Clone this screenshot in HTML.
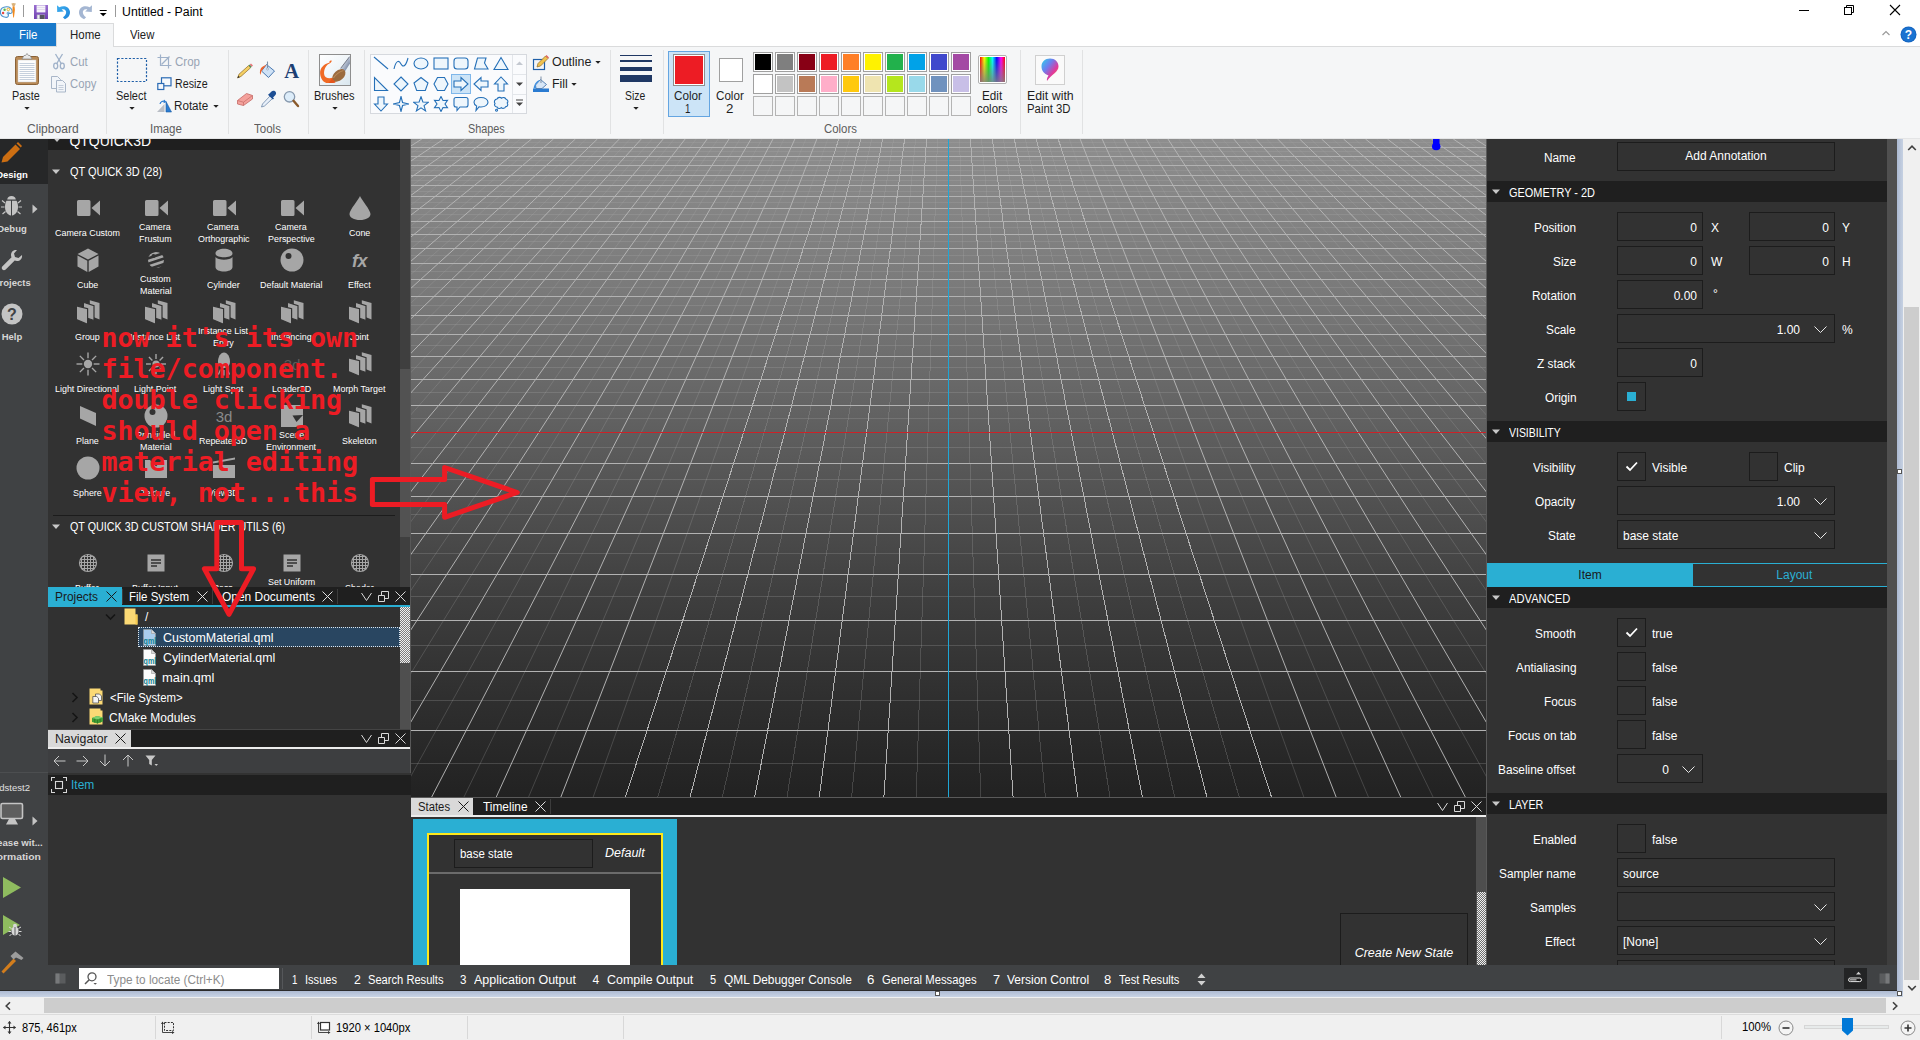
<!DOCTYPE html>
<html lang="en"><head><meta charset="utf-8"><title>Untitled - Paint</title>
<style>
html,body{margin:0;padding:0;}
body{width:1920px;height:1040px;overflow:hidden;position:relative;background:#fff;font-family:"Liberation Sans",sans-serif;}
body div,body svg{position:absolute;}
.t{white-space:nowrap;}
.seg{font-family:"Liberation Sans",sans-serif;}
.q{font-family:"Liberation Sans",sans-serif;}
</style></head>
<body>
<div style="left:0px;top:0px;width:1920px;height:23px;background:#fff;"></div>
<div class="t" style="left:122.38px;top:3.64px;font-size:12px;color:#000;line-height:16px;transform:scaleX(1.0244);transform-origin:0 0;">Untitled - Paint</div>
<svg style="left:0px;top:2px;" width="18" height="18" viewBox="0 0 18 18"><path d="M6.3 4.8 C10 4.6 12.3 6.8 12.2 9.6 C12.1 11 11 11.6 10 11.4 C8.8 11.2 8 11.9 8.3 13 C8.7 14.5 7.5 15.6 5.5 15.3 C2.3 14.8 0.3 12.6 0.4 10 C0.5 7 3 5 6.3 4.8Z" fill="#f4f9fd" stroke="#4c93cc" stroke-width="1.1"/>
<circle cx="4.6" cy="7.8" r="1.2" fill="#57b947"/><circle cx="8.3" cy="7.4" r="1.3" fill="none" stroke="#f0b323" stroke-width="1"/><circle cx="3.1" cy="11" r="1.2" fill="#e8453c"/><circle cx="8.2" cy="11.2" r="1.1" fill="none" stroke="#4c93cc" stroke-width="0.9"/>
<path d="M11.3 1.4 Q13.6 0.4 15.9 1.6 L14.6 4.2 H12.6Z" fill="#d9b27c"/><path d="M12.7 4.2 H14.5 L14.9 8 L13.9 15.6 H13.2 L12.4 8Z" fill="#f28a1e"/></svg>
<div style="left:23px;top:5px;width:1px;height:12px;background:#9a9a9a;"></div>
<svg style="left:33px;top:4px;" width="16" height="16" viewBox="0 0 16 16"><defs><linearGradient id="svg1" x1="0" y1="0" x2="0" y2="1"><stop offset="0" stop-color="#9a6fd0"/><stop offset="1" stop-color="#6f3fb0"/></linearGradient></defs>
<rect x="1" y="1" width="14" height="14" fill="url(#svg1)"/><rect x="3.6" y="1.4" width="8.8" height="7" fill="#f6f3fa"/><path d="M4.2 3.5 H11.8 M4.2 5.5 H11.8" stroke="#d5cce6" stroke-width="0.6"/><rect x="3.8" y="10.6" width="8.2" height="4.4" fill="#b9b9c4"/><rect x="7" y="11" width="4.6" height="4" fill="#55555e"/><rect x="4.6" y="11.2" width="1.4" height="3.4" fill="#f0eef5"/></svg>
<svg style="left:56px;top:4px;" width="16" height="16" viewBox="0 0 16 16"><defs><linearGradient id="ug1" x1="0" y1="0" x2="1" y2="1"><stop offset="0" stop-color="#3fb0f0"/><stop offset="1" stop-color="#1c82d8"/></linearGradient></defs>
<path d="M1 1.2 L1.2 7.9 L7.9 7.6 L5.6 5.4 C8.6 4.4 10.6 6.4 10.1 9 C9.7 11 8.4 12.3 6.9 13.3 L8.9 15.2 C12.6 13.6 14.4 10.6 13.9 7.2 C13.1 2.5 7.6 0.8 3.3 3.3 Z" fill="url(#ug1)"/></svg>
<svg style="left:77px;top:4px;" width="16" height="16" viewBox="0 0 16 16"><path d="M15 1.2 L14.8 7.9 L8.1 7.6 L10.4 5.4 C7.4 4.4 5.4 6.4 5.9 9 C6.3 11 7.6 12.3 9.1 13.3 L7.1 15.2 C3.4 13.6 1.6 10.6 2.1 7.2 C2.9 2.5 8.4 0.8 12.7 3.3 Z" fill="#a4b6d2"/></svg>
<svg style="left:99px;top:8px;" width="9" height="10" viewBox="0 0 9 10"><rect x="0.7" y="2" width="7" height="1" fill="#000"/><path d="M0.9 5 L7.5 5 L4.2 8.3Z" fill="#000"/></svg>
<div style="left:115px;top:5px;width:1px;height:12px;background:#9a9a9a;"></div>
<svg style="left:1790px;top:0px;" width="130" height="23" viewBox="0 0 130 23"><path d="M9 10.5 H19" stroke="#000" stroke-width="1"/>
<rect x="54.5" y="7.5" width="7" height="7" fill="none" stroke="#000" stroke-width="1"/><path d="M56.5 7.5 V5.5 H63.5 V12.5 H61.5" fill="none" stroke="#000" stroke-width="1"/>
<path d="M100 5 L110 15 M110 5 L100 15" stroke="#000" stroke-width="1.1"/></svg>
<div style="left:0px;top:23px;width:1920px;height:24px;background:#fff;border-bottom:1px solid #dadbdc;box-sizing:border-box;"></div>
<div style="left:0px;top:23px;width:56px;height:23px;background:#1979ca;"></div>
<div class="t" style="left:18.64px;top:26.64px;font-size:12px;color:#fff;line-height:16px;transform:scaleX(0.9556);transform-origin:0 0;">File</div>
<div style="left:56px;top:23px;width:58px;height:24px;background:#f5f6f7;border:1px solid #dadbdc;border-bottom:none;box-sizing:border-box;"></div>
<div class="t" style="left:69.64px;top:26.64px;font-size:12px;color:#222;line-height:16px;transform:scaleX(0.9542);transform-origin:0 0;">Home</div>
<div class="t" style="left:129.50px;top:26.64px;font-size:12px;color:#222;line-height:16px;transform:scaleX(0.9419);transform-origin:0 0;">View</div>
<svg style="left:1880px;top:27px;" width="12" height="12" viewBox="0 0 12 12"><path d="M2.5 8 L6 4.5 L9.5 8" fill="none" stroke="#9a9a9a" stroke-width="1.2"/></svg>
<svg style="left:1900px;top:26px;" width="17" height="17" viewBox="0 0 17 17"><circle cx="8.5" cy="8.5" r="8" fill="#1565c0"/><circle cx="8.5" cy="8.5" r="7" fill="#1a73d1"/><text x="8.5" y="13" font-size="12" font-weight="bold" fill="#fff" text-anchor="middle" font-family="Liberation Sans, sans-serif">?</text></svg>
<div style="left:0px;top:47px;width:1920px;height:91px;background:#f5f6f7;"></div>
<div style="left:0px;top:138px;width:1920px;height:1px;background:#e4e5e6;"></div>
<div style="left:106px;top:50px;width:1px;height:84px;background:#e1e2e3;"></div>
<div style="left:228px;top:50px;width:1px;height:84px;background:#e1e2e3;"></div>
<div style="left:308px;top:50px;width:1px;height:84px;background:#e1e2e3;"></div>
<div style="left:364px;top:50px;width:1px;height:84px;background:#e1e2e3;"></div>
<div style="left:610px;top:50px;width:1px;height:84px;background:#e1e2e3;"></div>
<div style="left:663px;top:50px;width:1px;height:84px;background:#e1e2e3;"></div>
<div style="left:1020px;top:50px;width:1px;height:84px;background:#e1e2e3;"></div>
<div style="left:1082px;top:50px;width:1px;height:84px;background:#e1e2e3;"></div>
<div class="t" style="left:26.90px;top:120.64px;font-size:12px;color:#5c5c5c;line-height:16px;transform:scaleX(1.0060);transform-origin:0 0;">Clipboard</div>
<div class="t" style="left:150.25px;top:120.64px;font-size:12px;color:#5c5c5c;line-height:16px;transform:scaleX(0.9560);transform-origin:0 0;">Image</div>
<div class="t" style="left:254.01px;top:120.64px;font-size:12px;color:#5c5c5c;line-height:16px;transform:scaleX(0.9599);transform-origin:0 0;">Tools</div>
<div class="t" style="left:467.85px;top:120.64px;font-size:12px;color:#5c5c5c;line-height:16px;transform:scaleX(0.9020);transform-origin:0 0;">Shapes</div>
<div class="t" style="left:824.13px;top:120.64px;font-size:12px;color:#5c5c5c;line-height:16px;transform:scaleX(0.9496);transform-origin:0 0;">Colors</div>
<svg style="left:13px;top:52px;" width="28" height="34" viewBox="0 0 28 34"><rect x="2.5" y="4.5" width="23" height="28" rx="2" fill="#b98a56" stroke="#8a6238" stroke-width="1"/>
<rect x="5" y="8" width="18" height="22" fill="#fdfdfd" stroke="#c9c9c9" stroke-width="0.5"/>
<g stroke="#b8c4d4" stroke-width="0.8"><path d="M6.5 11.5h15M6.5 13.5h15M6.5 15.5h15M6.5 17.5h15M6.5 19.5h15M6.5 21.5h15M6.5 23.5h15M6.5 25.5h15M6.5 27.5h15"/></g>
<path d="M9 7 L11 3.5 L12.5 3.5 L14 1.5 L15.5 3.5 L17 3.5 L19 7 Z" fill="#e8e8e8" stroke="#8a8a8a" stroke-width="0.8"/></svg>
<div class="t" style="left:12.49px;top:87.84px;font-size:12px;color:#1e1e1e;line-height:16px;transform:scaleX(0.9010);transform-origin:0 0;">Paste</div>
<svg style="left:23.5px;top:106.5px;" width="6" height="4" viewBox="0 0 6 4"><path d="M0.3 0 L5.7 0 L3 2.8Z" fill="#222"/></svg>
<svg style="left:52px;top:53px;" width="14" height="17" viewBox="0 0 14 17"><g fill="none" stroke="#9fb1c9" stroke-width="1.3"><path d="M3.5 1 L9.5 11"/><path d="M10.5 1 L4.5 11"/><ellipse cx="3.7" cy="13" rx="2" ry="2.8"/><ellipse cx="10.3" cy="13" rx="2" ry="2.8"/></g></svg>
<div class="t" style="left:69.93px;top:53.64px;font-size:12px;color:#98a4b4;line-height:16px;transform:scaleX(0.9444);transform-origin:0 0;">Cut</div>
<svg style="left:50px;top:75px;" width="17" height="18" viewBox="0 0 17 18"><g fill="#f2f5f9" stroke="#a9b6c8" stroke-width="1"><path d="M1.5 1.5 h6 l3 3 v9 h-9z"/><path d="M6.5 5.5 h6 l3 3 v8.5 h-9z"/></g><g stroke="#b9c4d3" stroke-width="0.8"><path d="M8.5 10.5h5M8.5 12.5h5M8.5 14.5h5"/></g></svg>
<div class="t" style="left:69.94px;top:75.64px;font-size:12px;color:#98a4b4;line-height:16px;transform:scaleX(0.9380);transform-origin:0 0;">Copy</div>
<svg style="left:116px;top:57px;" width="32" height="26" viewBox="0 0 32 26"><rect x="1.5" y="1.5" width="29" height="23" fill="none" stroke="#1f5fa8" stroke-width="1.2" stroke-dasharray="2.2 1.6"/></svg>
<div class="t" style="left:115.74px;top:87.84px;font-size:12px;color:#1e1e1e;line-height:16px;transform:scaleX(0.9146);transform-origin:0 0;">Select</div>
<svg style="left:128.5px;top:106.5px;" width="6" height="4" viewBox="0 0 6 4"><path d="M0.3 0 L5.7 0 L3 2.8Z" fill="#222"/></svg>
<svg style="left:157px;top:54px;" width="15" height="15" viewBox="0 0 15 15"><g fill="none" stroke="#9fb1c9" stroke-width="1.2"><path d="M3.5 0.5 V11.5 H14.5"/><path d="M0.5 3.5 H11.5 V14.5"/><path d="M12.5 2.5 L4.5 10.5"/></g></svg>
<div class="t" style="left:174.72px;top:53.64px;font-size:12px;color:#98a4b4;line-height:16px;transform:scaleX(0.9598);transform-origin:0 0;">Crop</div>
<svg style="left:157px;top:77px;" width="15" height="14" viewBox="0 0 15 14"><g fill="#f5f8fc" stroke="#2a6ab4" stroke-width="1.2"><rect x="4.5" y="0.8" width="9.5" height="8"/><rect x="0.8" y="6.5" width="6" height="6"/></g></svg>
<div class="t" style="left:174.50px;top:75.64px;font-size:12px;color:#1e1e1e;line-height:16px;transform:scaleX(0.8895);transform-origin:0 0;">Resize</div>
<svg style="left:156px;top:99px;" width="17" height="14" viewBox="0 0 17 14"><path d="M1 13 L8.5 13 L8.5 5 Z" fill="#b9bec6"/><path d="M10 13 L15.5 13 L10 2.5 Z" fill="#2a7bd1" stroke="#1d5ea6" stroke-width="0.6"/><path d="M4 5 C4.5 2.5 7 1.5 9 2.5" fill="none" stroke="#2a7bd1" stroke-width="1.2"/><path d="M8 0.5 L10.5 3 L7.5 4.2Z" fill="#2a7bd1"/></svg>
<div class="t" style="left:174.43px;top:97.84px;font-size:12px;color:#1e1e1e;line-height:16px;transform:scaleX(0.9706);transform-origin:0 0;">Rotate</div>
<svg style="left:213px;top:104.5px;" width="6" height="4" viewBox="0 0 6 4"><path d="M0.3 0 L5.7 0 L3 2.8Z" fill="#222"/></svg>
<svg style="left:236px;top:62px;" width="18" height="18" viewBox="0 0 18 18"><path d="M1.5 16 L3 12.2 L12.6 3.6 L14.6 5.8 L5 14.4 Z" fill="#f4cf63" stroke="#8d6a2a" stroke-width="0.7"/><path d="M12.6 3.6 L13.8 2.5 L15.8 4.7 L14.6 5.8Z" fill="#4f8f5c"/><path d="M13.8 2.5 L15 1.4 L17 3.6 L15.8 4.7Z" fill="#e8787a"/><path d="M1.5 16 L2.4 13.7 L3.8 15.2Z" fill="#2a2a2a"/></svg>
<svg style="left:259px;top:61px;" width="18" height="18" viewBox="0 0 18 18"><path d="M7.5 3.5 L15.5 10 L9.5 16.5 L2.5 10 Z" fill="#cfe2f6" stroke="#4a78b0" stroke-width="1"/><path d="M2.5 10 L7.5 3.5 L3 6 C1 7.5 0.5 11 1.2 14 C2 12 2.2 11 2.5 10Z" fill="#f0622a"/><path d="M8.5 0.5 V8" stroke="#7d8fa6" stroke-width="1.1"/><circle cx="8.5" cy="8" r="1" fill="#fff" stroke="#7d8fa6" stroke-width="0.6"/></svg>
<div class="t" style="left:284.3px;top:58.5px;font-size:20.5px;color:#1c3f73;line-height:24px;font-family:'Liberation Serif',serif;font-weight:bold;">A</div>
<svg style="left:236px;top:91px;" width="18" height="16" viewBox="0 0 18 16"><path d="M1.5 9.5 L10.5 2.5 L16.5 4.5 L16.5 8 L7.5 14.5 L1.5 13 Z" fill="#f4a19c" stroke="#c46a66" stroke-width="0.8"/><path d="M1.5 9.5 L7.5 11.2 L16.5 4.5 M7.5 11.2 V14.5" fill="none" stroke="#c46a66" stroke-width="0.7"/></svg>
<svg style="left:260px;top:90px;" width="17" height="18" viewBox="0 0 17 18"><path d="M10 6 L12.5 8.5 L4.5 16 L1.5 17 L2.5 14 Z" fill="#e8f0fa" stroke="#6c86a8" stroke-width="0.8"/><path d="M9 4 L11.5 1.5 C13 0.3 15.5 0.8 16 2.8 C16.3 4.3 15.5 5 14.5 6 L13 7.5 L14 8.5 L12.8 9.6 L8 4.8 L9.2 3.7Z" fill="#1d4f94"/></svg>
<svg style="left:283px;top:90px;" width="17" height="18" viewBox="0 0 17 18"><circle cx="6.5" cy="6.8" r="5.2" fill="#dcecf9" stroke="#8799ae" stroke-width="1.3"/><path d="M10.5 10.8 L15 16" stroke="#8a5a2b" stroke-width="2.4" stroke-linecap="round"/></svg>
<div style="left:319px;top:54px;width:32px;height:32px;background:linear-gradient(135deg,#ffffff 0%,#eef4f8 55%,#d9e6ee 100%);border:1px solid #8e8e8e;box-sizing:border-box;"></div>
<svg style="left:319px;top:54px;" width="32" height="32" viewBox="0 0 32 32"><defs><linearGradient id="bh1" x1="0" y1="0" x2="1" y2="1"><stop offset="0" stop-color="#eef1f6"/><stop offset="0.5" stop-color="#aeb9cc"/><stop offset="1" stop-color="#4c5d7c"/></linearGradient></defs>
<path d="M12.8 6.8 C11.5 6 10 7 10.6 8.6 C5 10 0.9 14 1.1 19.2 C1.4 25 5 29.5 9.5 29 C13 28.8 15.5 28.5 16.8 27.9 L13.9 23.5 C10 25 5.5 24 5.1 19.9 C4.8 15 7 12 8.7 10.4 C10.5 9.5 12.5 9 12.8 6.8Z" fill="#f06a25"/>
<path d="M21.6 14.4 L30.6 2.6 L31 9.5 L25.4 18.2Z" fill="url(#bh1)"/><path d="M21.6 14.4 L30.6 2.6" stroke="#5c6170" stroke-width="0.8"/>
<ellipse cx="19.9" cy="21.4" rx="7.6" ry="5" transform="rotate(-42 19.9 21.4)" fill="#9a6b3f"/><path d="M14.5 24 C17 20 21 17.5 24.5 16.5" stroke="#b88858" stroke-width="1.2" fill="none"/>
<path d="M13.2 24.5 L16.5 28.2 C14.5 29 11 29.2 9.5 29 Z" fill="#e4551c"/></svg>
<div class="t" style="left:314.47px;top:87.84px;font-size:12px;color:#1e1e1e;line-height:16px;transform:scaleX(0.9180);transform-origin:0 0;">Brushes</div>
<svg style="left:331.5px;top:106.5px;" width="6" height="4" viewBox="0 0 6 4"><path d="M0.3 0 L5.7 0 L3 2.8Z" fill="#222"/></svg>
<div style="left:370px;top:54px;width:157px;height:60px;background:#fafbfd;border:1px solid #d6d9de;box-sizing:border-box;"></div>
<div style="left:512px;top:55px;width:1px;height:58px;background:#e3e6ea;"></div>
<div style="left:451px;top:74px;width:20px;height:20px;background:#cce4f7;border:1px solid #7fb7ea;box-sizing:border-box;"></div>
<svg style="left:373px;top:56px;" width="16" height="16" viewBox="0 0 16 16"><path d="M1 1 L15 13" fill="none" stroke="#2570b8" stroke-width="1.1"/></svg>
<svg style="left:393px;top:56px;" width="16" height="16" viewBox="0 0 16 16"><path d="M1 13 C3 4 6 4 8 8 C10 12 13 10 15 2" fill="none" stroke="#2570b8" stroke-width="1.1"/></svg>
<svg style="left:413px;top:56px;" width="16" height="16" viewBox="0 0 16 16"><ellipse cx="8" cy="7.5" rx="7" ry="5.5" fill="#eef6fc" stroke="#2570b8" stroke-width="1.1" stroke-linejoin="miter"/></svg>
<svg style="left:433px;top:56px;" width="16" height="16" viewBox="0 0 16 16"><rect x="1" y="2" width="14" height="11" fill="#eef6fc" stroke="#2570b8" stroke-width="1.1" stroke-linejoin="miter"/></svg>
<svg style="left:453px;top:56px;" width="16" height="16" viewBox="0 0 16 16"><rect x="1" y="2" width="14" height="11" rx="3" fill="#eef6fc" stroke="#2570b8" stroke-width="1.1" stroke-linejoin="miter"/></svg>
<svg style="left:473px;top:56px;" width="16" height="16" viewBox="0 0 16 16"><path d="M1.5 13 L4.5 2 L13 2 L11.5 7 L15 13 Z" fill="#eef6fc" stroke="#2570b8" stroke-width="1.1" stroke-linejoin="miter"/></svg>
<svg style="left:493px;top:56px;" width="16" height="16" viewBox="0 0 16 16"><path d="M8 1.5 L15 13.5 L1 13.5 Z" fill="#eef6fc" stroke="#2570b8" stroke-width="1.1" stroke-linejoin="miter"/></svg>
<svg style="left:373px;top:76px;" width="16" height="16" viewBox="0 0 16 16"><path d="M1.5 1.5 L1.5 14.5 L14.5 14.5 Z" fill="#eef6fc" stroke="#2570b8" stroke-width="1.1" stroke-linejoin="miter"/></svg>
<svg style="left:393px;top:76px;" width="16" height="16" viewBox="0 0 16 16"><path d="M8 1 L15 8 L8 15 L1 8 Z" fill="#eef6fc" stroke="#2570b8" stroke-width="1.1" stroke-linejoin="miter"/></svg>
<svg style="left:413px;top:76px;" width="16" height="16" viewBox="0 0 16 16"><path d="M8 1.5 L15 7 L12.3 14.5 L3.7 14.5 L1 7 Z" fill="#eef6fc" stroke="#2570b8" stroke-width="1.1" stroke-linejoin="miter"/></svg>
<svg style="left:433px;top:76px;" width="16" height="16" viewBox="0 0 16 16"><path d="M4.5 1.5 L11.5 1.5 L15 8 L11.5 14.5 L4.5 14.5 L1 8 Z" fill="#eef6fc" stroke="#2570b8" stroke-width="1.1" stroke-linejoin="miter"/></svg>
<svg style="left:453px;top:76px;" width="16" height="16" viewBox="0 0 16 16"><path d="M1 5 L8 5 L8 1.5 L15 8 L8 14.5 L8 11 L1 11 Z" fill="#eef6fc" stroke="#2570b8" stroke-width="1.1" stroke-linejoin="miter"/></svg>
<svg style="left:473px;top:76px;" width="16" height="16" viewBox="0 0 16 16"><path d="M15 5 L8 5 L8 1.5 L1 8 L8 14.5 L8 11 L15 11 Z" fill="#eef6fc" stroke="#2570b8" stroke-width="1.1" stroke-linejoin="miter"/></svg>
<svg style="left:493px;top:76px;" width="16" height="16" viewBox="0 0 16 16"><path d="M5 15 L5 8 L1.5 8 L8 1 L14.5 8 L11 8 L11 15 Z" fill="#eef6fc" stroke="#2570b8" stroke-width="1.1" stroke-linejoin="miter"/></svg>
<svg style="left:373px;top:96px;" width="16" height="16" viewBox="0 0 16 16"><path d="M5 1 L5 8 L1.5 8 L8 15 L14.5 8 L11 8 L11 1 Z" fill="#eef6fc" stroke="#2570b8" stroke-width="1.1" stroke-linejoin="miter"/></svg>
<svg style="left:393px;top:96px;" width="16" height="16" viewBox="0 0 16 16"><polygon points="8.00,0.50 9.56,6.44 15.50,8.00 9.56,9.56 8.00,15.50 6.44,9.56 0.50,8.00 6.44,6.44" fill="#eef6fc" stroke="#2570b8" stroke-width="1.1" stroke-linejoin="miter"/></svg>
<svg style="left:413px;top:96px;" width="16" height="16" viewBox="0 0 16 16"><polygon points="8.00,0.80 9.88,6.01 15.42,6.19 11.04,9.59 12.58,14.91 8.00,11.80 3.42,14.91 4.96,9.59 0.58,6.19 6.12,6.01" fill="#eef6fc" stroke="#2570b8" stroke-width="1.1" stroke-linejoin="miter"/></svg>
<svg style="left:433px;top:96px;" width="16" height="16" viewBox="0 0 16 16"><polygon points="8.00,0.50 10.00,4.54 14.50,4.25 12.00,8.00 14.50,11.75 10.00,11.46 8.00,15.50 6.00,11.46 1.50,11.75 4.00,8.00 1.50,4.25 6.00,4.54" fill="#eef6fc" stroke="#2570b8" stroke-width="1.1" stroke-linejoin="miter"/></svg>
<svg style="left:453px;top:96px;" width="16" height="16" viewBox="0 0 16 16"><path d="M3 1.5 H13 Q15 1.5 15 3.5 V9 Q15 11 13 11 H7 L4 14.5 V11 H3 Q1 11 1 9 V3.5 Q1 1.5 3 1.5Z" fill="#eef6fc" stroke="#2570b8" stroke-width="1.1" stroke-linejoin="miter"/></svg>
<svg style="left:473px;top:96px;" width="16" height="16" viewBox="0 0 16 16"><path d="M8 1.5 C12 1.5 15 3.6 15 6.3 C15 9 12 11 8 11 C7.3 11 6.6 10.9 6 10.8 L3 14.5 L3.6 10 C2 9.2 1 7.8 1 6.3 C1 3.6 4 1.5 8 1.5Z" fill="#eef6fc" stroke="#2570b8" stroke-width="1.1" stroke-linejoin="miter"/></svg>
<svg style="left:493px;top:96px;" width="16" height="16" viewBox="0 0 16 16"><path d="M4 3 C5 1 7.5 1 8.5 2.2 C10 1 12.5 1.5 13 3.2 C15 3.5 15.5 6 14.2 7 C15.5 8.5 14.5 10.8 12.5 10.8 C12 12.5 9.5 12.8 8.3 11.6 C7 13 4.5 12.6 4 11 C2 11 0.8 9 2 7.4 C0.6 6 1.6 3.2 4 3Z M3.5 13.2 a1 1 0 1 0 0.1 0Z" fill="#eef6fc" stroke="#2570b8" stroke-width="1.1" stroke-linejoin="miter"/></svg>
<svg style="left:516px;top:61px;" width="8" height="5" viewBox="0 0 8 5"><path d="M0 4 L3.5 0.5 L7 4Z" fill="#c3c8d0"/></svg>
<svg style="left:516px;top:82px;" width="8" height="5" viewBox="0 0 8 5"><path d="M0 0.5 L7 0.5 L3.5 4Z" fill="#444"/></svg>
<svg style="left:516px;top:99px;" width="8" height="8" viewBox="0 0 8 8"><rect x="0" y="0.5" width="7" height="1" fill="#444"/><path d="M0 3.5 L7 3.5 L3.5 7Z" fill="#444"/></svg>
<div style="left:513px;top:94px;width:13px;height:1px;background:#e3e6ea;"></div>
<div style="left:513px;top:74px;width:13px;height:1px;background:#e3e6ea;"></div>
<svg style="left:532px;top:54px;" width="18" height="17" viewBox="0 0 18 17"><rect x="1.5" y="5.5" width="11" height="10" fill="none" stroke="#1f5fa8" stroke-width="1.2"/><path d="M5 13 L6 9.5 L13.5 2 L16 4.5 L8.5 12 Z" fill="#f2c24e" stroke="#8d6a2a" stroke-width="0.7"/><path d="M13.5 2 L14.5 1 L17 3.5 L16 4.5Z" fill="#e0605a"/></svg>
<div class="t" style="left:551.98px;top:53.64px;font-size:12px;color:#1e1e1e;line-height:16px;transform:scaleX(1.0351);transform-origin:0 0;">Outline</div>
<svg style="left:594.5px;top:60.5px;" width="6" height="4" viewBox="0 0 6 4"><path d="M0.3 0 L5.7 0 L3 2.8Z" fill="#222"/></svg>
<svg style="left:532px;top:76px;" width="18" height="17" viewBox="0 0 18 17"><rect x="1" y="12.5" width="16" height="3.5" fill="#2a7bd1"/><path d="M8.5 3.5 L14.5 8.5 L10 12.5 L4 12.5 L3.5 9 Z" fill="#d7e6f6" stroke="#4a78b0" stroke-width="0.9"/><path d="M3.5 9 L8 4 C5 4.5 2.5 7 1.5 12.5 L4 12.5Z" fill="#3d8fe0"/><path d="M9 0.5 V7" stroke="#7d8fa6" stroke-width="1"/></svg>
<div class="t" style="left:551.57px;top:75.64px;font-size:12px;color:#1e1e1e;line-height:16px;transform:scaleX(1.0365);transform-origin:0 0;">Fill</div>
<svg style="left:570.5px;top:82.5px;" width="6" height="4" viewBox="0 0 6 4"><path d="M0.3 0 L5.7 0 L3 2.8Z" fill="#222"/></svg>
<div style="left:620px;top:55px;width:32px;height:1px;background:#1f3864;"></div>
<div style="left:620px;top:60px;width:32px;height:2px;background:#1f3864;"></div>
<div style="left:620px;top:67px;width:32px;height:4px;background:#1f3864;"></div>
<div style="left:620px;top:75px;width:32px;height:7px;background:#1f3864;"></div>
<div class="t" style="left:624.87px;top:87.84px;font-size:12px;color:#1e1e1e;line-height:16px;transform:scaleX(0.8661);transform-origin:0 0;">Size</div>
<svg style="left:632.5px;top:106.5px;" width="6" height="4" viewBox="0 0 6 4"><path d="M0.3 0 L5.7 0 L3 2.8Z" fill="#222"/></svg>
<div style="left:668px;top:51px;width:42px;height:66px;background:#cce4f7;border:1px solid #64a5e1;box-sizing:border-box;"></div>
<div style="left:673px;top:54px;width:32px;height:32px;background:#fff;border:1px solid #8e8e8e;box-sizing:border-box;"></div>
<div style="left:675px;top:56px;width:28px;height:28px;background:#ed1c24;"></div>
<div class="t" style="left:673.92px;top:87.84px;font-size:12px;color:#1e1e1e;line-height:16px;transform:scaleX(0.9749);transform-origin:0 0;">Color</div>
<div class="t" style="left:685.07px;top:100.64px;font-size:12px;color:#1e1e1e;line-height:16px;transform:scaleX(0.8077);transform-origin:0 0;">1</div>
<div style="left:719px;top:58px;width:24px;height:24px;background:#fff;border:1px solid #a0a0a0;box-sizing:border-box;"></div>
<div class="t" style="left:716.12px;top:87.84px;font-size:12px;color:#1e1e1e;line-height:16px;transform:scaleX(0.9677);transform-origin:0 0;">Color</div>
<div class="t" style="left:726.03px;top:100.64px;font-size:12px;color:#1e1e1e;line-height:16px;transform:scaleX(1.1091);transform-origin:0 0;">2</div>
<div style="left:753px;top:52px;width:20px;height:20px;background:#fff;border:1px solid #a0a0a0;box-sizing:border-box;"></div>
<div style="left:755px;top:54px;width:16px;height:16px;background:#000000;"></div>
<div style="left:775px;top:52px;width:20px;height:20px;background:#fff;border:1px solid #a0a0a0;box-sizing:border-box;"></div>
<div style="left:777px;top:54px;width:16px;height:16px;background:#7f7f7f;"></div>
<div style="left:797px;top:52px;width:20px;height:20px;background:#fff;border:1px solid #a0a0a0;box-sizing:border-box;"></div>
<div style="left:799px;top:54px;width:16px;height:16px;background:#880015;"></div>
<div style="left:819px;top:52px;width:20px;height:20px;background:#fff;border:1px solid #a0a0a0;box-sizing:border-box;"></div>
<div style="left:821px;top:54px;width:16px;height:16px;background:#ed1c24;"></div>
<div style="left:841px;top:52px;width:20px;height:20px;background:#fff;border:1px solid #a0a0a0;box-sizing:border-box;"></div>
<div style="left:843px;top:54px;width:16px;height:16px;background:#ff7f27;"></div>
<div style="left:863px;top:52px;width:20px;height:20px;background:#fff;border:1px solid #a0a0a0;box-sizing:border-box;"></div>
<div style="left:865px;top:54px;width:16px;height:16px;background:#fff200;"></div>
<div style="left:885px;top:52px;width:20px;height:20px;background:#fff;border:1px solid #a0a0a0;box-sizing:border-box;"></div>
<div style="left:887px;top:54px;width:16px;height:16px;background:#22b14c;"></div>
<div style="left:907px;top:52px;width:20px;height:20px;background:#fff;border:1px solid #a0a0a0;box-sizing:border-box;"></div>
<div style="left:909px;top:54px;width:16px;height:16px;background:#00a2e8;"></div>
<div style="left:929px;top:52px;width:20px;height:20px;background:#fff;border:1px solid #a0a0a0;box-sizing:border-box;"></div>
<div style="left:931px;top:54px;width:16px;height:16px;background:#3f48cc;"></div>
<div style="left:951px;top:52px;width:20px;height:20px;background:#fff;border:1px solid #a0a0a0;box-sizing:border-box;"></div>
<div style="left:953px;top:54px;width:16px;height:16px;background:#a349a4;"></div>
<div style="left:753px;top:74px;width:20px;height:20px;background:#fff;border:1px solid #a0a0a0;box-sizing:border-box;"></div>
<div style="left:755px;top:76px;width:16px;height:16px;background:#ffffff;"></div>
<div style="left:775px;top:74px;width:20px;height:20px;background:#fff;border:1px solid #a0a0a0;box-sizing:border-box;"></div>
<div style="left:777px;top:76px;width:16px;height:16px;background:#c3c3c3;"></div>
<div style="left:797px;top:74px;width:20px;height:20px;background:#fff;border:1px solid #a0a0a0;box-sizing:border-box;"></div>
<div style="left:799px;top:76px;width:16px;height:16px;background:#b97a57;"></div>
<div style="left:819px;top:74px;width:20px;height:20px;background:#fff;border:1px solid #a0a0a0;box-sizing:border-box;"></div>
<div style="left:821px;top:76px;width:16px;height:16px;background:#ffaec9;"></div>
<div style="left:841px;top:74px;width:20px;height:20px;background:#fff;border:1px solid #a0a0a0;box-sizing:border-box;"></div>
<div style="left:843px;top:76px;width:16px;height:16px;background:#ffc90e;"></div>
<div style="left:863px;top:74px;width:20px;height:20px;background:#fff;border:1px solid #a0a0a0;box-sizing:border-box;"></div>
<div style="left:865px;top:76px;width:16px;height:16px;background:#efe4b0;"></div>
<div style="left:885px;top:74px;width:20px;height:20px;background:#fff;border:1px solid #a0a0a0;box-sizing:border-box;"></div>
<div style="left:887px;top:76px;width:16px;height:16px;background:#b5e61d;"></div>
<div style="left:907px;top:74px;width:20px;height:20px;background:#fff;border:1px solid #a0a0a0;box-sizing:border-box;"></div>
<div style="left:909px;top:76px;width:16px;height:16px;background:#99d9ea;"></div>
<div style="left:929px;top:74px;width:20px;height:20px;background:#fff;border:1px solid #a0a0a0;box-sizing:border-box;"></div>
<div style="left:931px;top:76px;width:16px;height:16px;background:#7092be;"></div>
<div style="left:951px;top:74px;width:20px;height:20px;background:#fff;border:1px solid #a0a0a0;box-sizing:border-box;"></div>
<div style="left:953px;top:76px;width:16px;height:16px;background:#c8bfe7;"></div>
<div style="left:753px;top:96px;width:20px;height:20px;background:#f5f6f7;border:1px solid #b4b4b4;box-sizing:border-box;"></div>
<div style="left:775px;top:96px;width:20px;height:20px;background:#f5f6f7;border:1px solid #b4b4b4;box-sizing:border-box;"></div>
<div style="left:797px;top:96px;width:20px;height:20px;background:#f5f6f7;border:1px solid #b4b4b4;box-sizing:border-box;"></div>
<div style="left:819px;top:96px;width:20px;height:20px;background:#f5f6f7;border:1px solid #b4b4b4;box-sizing:border-box;"></div>
<div style="left:841px;top:96px;width:20px;height:20px;background:#f5f6f7;border:1px solid #b4b4b4;box-sizing:border-box;"></div>
<div style="left:863px;top:96px;width:20px;height:20px;background:#f5f6f7;border:1px solid #b4b4b4;box-sizing:border-box;"></div>
<div style="left:885px;top:96px;width:20px;height:20px;background:#f5f6f7;border:1px solid #b4b4b4;box-sizing:border-box;"></div>
<div style="left:907px;top:96px;width:20px;height:20px;background:#f5f6f7;border:1px solid #b4b4b4;box-sizing:border-box;"></div>
<div style="left:929px;top:96px;width:20px;height:20px;background:#f5f6f7;border:1px solid #b4b4b4;box-sizing:border-box;"></div>
<div style="left:951px;top:96px;width:20px;height:20px;background:#f5f6f7;border:1px solid #b4b4b4;box-sizing:border-box;"></div>
<div style="left:978px;top:55px;width:29px;height:29px;background:#fff;border:1px solid #b0b0b0;box-sizing:border-box;border-radius:2px;"></div>
<div style="left:980px;top:57px;width:25px;height:25px;background:linear-gradient(to bottom,rgba(128,128,128,0) 0%,rgba(128,128,128,0.85) 100%),linear-gradient(to right,#f00 0%,#ff0 17%,#0f0 34%,#0ff 50%,#00f 67%,#f0f 84%,#f00 100%);"></div>
<div class="t" style="left:981.62px;top:87.84px;font-size:12px;color:#1e1e1e;line-height:16px;transform:scaleX(0.9746);transform-origin:0 0;">Edit</div>
<div class="t" style="left:977.32px;top:100.64px;font-size:12px;color:#1e1e1e;line-height:16px;transform:scaleX(0.9550);transform-origin:0 0;">colors</div>
<div style="left:1035px;top:55px;width:30px;height:30px;background:#fafafa;border:1px solid #d0d0d0;box-sizing:border-box;"></div>
<svg style="left:1035px;top:55px;" width="30" height="30" viewBox="0 0 30 30"><defs><linearGradient id="p3d" x1="0" y1="0" x2="1" y2="1"><stop offset="0" stop-color="#2bd4e8"/><stop offset="0.35" stop-color="#6b7ff0"/><stop offset="0.65" stop-color="#e0389c"/><stop offset="1" stop-color="#ff9a1f"/></linearGradient></defs>
<path d="M15 3.5 C20 3.5 23.5 7 23.5 11.5 C23.5 17 17 19 12 26 C11.5 24 12.5 22 13.5 20.5 C9 19 6.5 15.5 6.5 11.5 C6.5 7 10 3.5 15 3.5Z" fill="url(#p3d)"/></svg>
<div class="t" style="left:1026.57px;top:87.84px;font-size:12px;color:#1e1e1e;line-height:16px;transform:scaleX(1.0297);transform-origin:0 0;">Edit with</div>
<div class="t" style="left:1027.45px;top:100.64px;font-size:12px;color:#1e1e1e;line-height:16px;transform:scaleX(0.9462);transform-origin:0 0;">Paint 3D</div>
<div style="left:0px;top:139px;width:48px;height:852px;background:#404244;"></div>
<div style="left:0px;top:139px;width:48px;height:45px;background:#262728;"></div>
<div class="t q" style="left:-28.0px;top:167.7px;font-size:9.5px;color:#ffffff;width:80px;text-align:center;line-height:14px;font-weight:bold;">Design</div>
<div class="t q" style="left:-28.0px;top:221.7px;font-size:9.5px;color:#d6d6d6;width:80px;text-align:center;line-height:14px;font-weight:bold;">Debug</div>
<div class="t q" style="left:-28.0px;top:275.6px;font-size:9.5px;color:#d6d6d6;width:80px;text-align:center;line-height:14px;font-weight:bold;">Projects</div>
<div class="t q" style="left:-28.0px;top:329.5px;font-size:9.5px;color:#d6d6d6;width:80px;text-align:center;line-height:14px;font-weight:bold;">Help</div>
<svg style="left:0px;top:141px;" width="24" height="24" viewBox="0 0 24 24"><path d="M1.5 21.5 L3 16 L15.5 3.5 L20 8 L7.5 20.5 Z" fill="#cc6e12"/><path d="M16.5 2.5 L18 1 L22 5 L20.8 6.5Z" fill="#cc6e12"/></svg>
<svg style="left:0px;top:194px;" width="24" height="24" viewBox="0 0 24 24"><g fill="#c4c4c4"><path d="M11.5 2 C14 2 15.5 3.5 15.8 5.5 L7.2 5.5 C7.5 3.5 9 2 11.5 2Z"/><path d="M6.5 6.8 H11 V21.5 C7.5 21 5 17.5 5 13 C5 10.5 5.5 8.3 6.5 6.8Z M12 6.8 H16.5 C17.5 8.3 18 10.5 18 13 C18 17.5 15.5 21 12 21.5Z"/></g>
<g stroke="#c4c4c4" stroke-width="1.2" fill="none"><path d="M5 9 L2 6.5 M4.5 13 H1 M5.5 17.5 L2.5 20 M18 9 L21 6.5 M18.5 13 H22 M17.5 17.5 L20.5 20"/></g></svg>
<svg style="left:32px;top:204px;" width="6" height="10" viewBox="0 0 6 10"><path d="M0.5 0.5 L5.5 5 L0.5 9.5Z" fill="#c4c4c4"/></svg>
<svg style="left:0px;top:248px;" width="24" height="24" viewBox="0 0 24 24"><path d="M17 2 C14 1.5 11 3.5 11 7 C11 8 11.2 8.6 11.5 9.3 L2.5 18.3 C1.5 19.3 1.5 20.7 2.4 21.6 C3.3 22.5 4.7 22.5 5.7 21.5 L14.7 12.5 C15.4 12.8 16 13 17 13 C20.5 13 22.5 10 22 7 L18.5 10 L15 9 L14 5.5Z" fill="#c4c4c4"/></svg>
<svg style="left:1px;top:303px;" width="22" height="22" viewBox="0 0 22 22"><circle cx="11" cy="11" r="10.5" fill="#c4c4c4"/><text x="11" y="16.5" font-size="16" font-weight="bold" fill="#404244" text-anchor="middle" font-family="Liberation Sans, sans-serif">?</text></svg>
<div style="left:0px;top:772px;width:48px;height:1px;background:#4c4e50;"></div>
<div class="t q" style="left:-28.0px;top:781.0px;font-size:9.5px;color:#e0e0e0;width:80px;text-align:center;line-height:13px;">qdstest2</div>
<svg style="left:0px;top:802px;" width="26" height="26" viewBox="0 0 26 26"><rect x="1" y="1.5" width="21.5" height="15" rx="1.5" fill="#5e5e5e" stroke="#c4c4c4" stroke-width="1.6"/><path d="M9 17 H15 L18 22.5 H6Z" fill="#c4c4c4"/></svg>
<svg style="left:32px;top:816px;" width="6" height="10" viewBox="0 0 6 10"><path d="M0.5 0.5 L5.5 5 L0.5 9.5Z" fill="#c4c4c4"/></svg>
<div class="t" style="left:-18.31px;top:836.51px;font-size:9.5px;color:#d6d6d6;line-height:12px;font-weight:bold;transform:scaleX(1.0171);transform-origin:0 0;">Release wit...</div>
<div class="t" style="left:-16.45px;top:850.51px;font-size:9.5px;color:#d6d6d6;line-height:12px;font-weight:bold;transform:scaleX(1.0881);transform-origin:0 0;">Information</div>
<svg style="left:2px;top:876px;" width="20" height="24" viewBox="0 0 20 24"><path d="M1 1 L19 11.5 L1 22Z" fill="#8fbc5f"/></svg>
<svg style="left:2px;top:914px;" width="24" height="24" viewBox="0 0 24 24"><path d="M1 1 L18 11 L1 21Z" fill="#8fbc5f"/><g fill="#d8d8d8"><ellipse cx="13" cy="17" rx="3.6" ry="4.6"/><circle cx="13" cy="11.8" r="2"/></g><g stroke="#d8d8d8" stroke-width="1"><path d="M9.5 14.5 L7 13 M9 17.5 H6.5 M9.5 20 L7.5 22 M16.5 14.5 L19 13 M17 17.5 H19.5 M16.5 20 L18.5 22"/></g><path d="M13 13 V21.5" stroke="#404244" stroke-width="0.8"/></svg>
<svg style="left:0px;top:950px;" width="26" height="26" viewBox="0 0 26 26"><path d="M1.5 21.5 L13.5 8.5 L16 11 L3.5 23.5Z" fill="#d27d1d"/><path d="M10.5 6 L15.5 1.5 L23.5 8 L21.5 10 L16 7.5 L13.5 9.5Z" fill="#9c9c9c"/></svg>
<div style="left:48px;top:139px;width:352px;height:449px;background:#323232;"></div>
<div style="left:48px;top:139px;width:352px;height:10.5px;background:#1f1f1f;"></div>
<div style="left:48px;top:128px;width:352px;height:21.5px;overflow:hidden;clip-path:inset(11px 0 0 0);"><svg style="left:5px;top:9px;" width="9" height="6" viewBox="0 0 9 6"><path d="M0 0.5 H8 L4 5Z" fill="#c8c8c8"/></svg>
<div class="t" style="left:21.40px;top:3.95px;font-size:14px;color:#fff;line-height:18px;">QTQUICK3D</div>
</div>
<svg style="left:52px;top:169px;" width="9" height="6" viewBox="0 0 9 6"><path d="M0 0.5 H8 L4 5Z" fill="#c8c8c8"/></svg>
<div class="t" style="left:69.54px;top:164.34px;font-size:12px;color:#fff;line-height:16px;transform:scaleX(0.9109);transform-origin:0 0;">QT QUICK 3D (28)</div>
<svg style="left:76px;top:196px;" width="24" height="24" viewBox="0 0 24 24"><path d="M1 5.5 Q1 4 2.5 4 H13 Q14.5 4 14.5 5.5 V18.5 Q14.5 20 13 20 H2.5 Q1 20 1 18.5Z M15.5 12 L24 4.5 V19.5Z" fill="#a6a6a6"/></svg>
<div class="t" style="left:55.09px;top:226.67px;font-size:9.6px;color:#fff;line-height:12px;transform:scaleX(0.9300);transform-origin:0 0;">Camera Custom</div>
<svg style="left:144px;top:196px;" width="24" height="24" viewBox="0 0 24 24"><path d="M1 5.5 Q1 4 2.5 4 H13 Q14.5 4 14.5 5.5 V18.5 Q14.5 20 13 20 H2.5 Q1 20 1 18.5Z M15.5 12 L24 4.5 V19.5Z" fill="#a6a6a6"/></svg>
<div class="t" style="left:139.41px;top:220.67px;font-size:9.6px;color:#fff;line-height:12px;transform:scaleX(0.9300);transform-origin:0 0;">Camera</div>
<div class="t" style="left:139.09px;top:232.67px;font-size:9.6px;color:#fff;line-height:12px;transform:scaleX(0.9300);transform-origin:0 0;">Frustum</div>
<svg style="left:212px;top:196px;" width="24" height="24" viewBox="0 0 24 24"><path d="M1 5.5 Q1 4 2.5 4 H13 Q14.5 4 14.5 5.5 V18.5 Q14.5 20 13 20 H2.5 Q1 20 1 18.5Z M15.5 12 L24 4.5 V19.5Z" fill="#a6a6a6"/></svg>
<div class="t" style="left:207.41px;top:220.67px;font-size:9.6px;color:#fff;line-height:12px;transform:scaleX(0.9300);transform-origin:0 0;">Camera</div>
<div class="t" style="left:197.60px;top:232.67px;font-size:9.6px;color:#fff;line-height:12px;transform:scaleX(0.9300);transform-origin:0 0;">Orthographic</div>
<svg style="left:280px;top:196px;" width="24" height="24" viewBox="0 0 24 24"><path d="M1 5.5 Q1 4 2.5 4 H13 Q14.5 4 14.5 5.5 V18.5 Q14.5 20 13 20 H2.5 Q1 20 1 18.5Z M15.5 12 L24 4.5 V19.5Z" fill="#a6a6a6"/></svg>
<div class="t" style="left:275.41px;top:220.67px;font-size:9.6px;color:#fff;line-height:12px;transform:scaleX(0.9300);transform-origin:0 0;">Camera</div>
<div class="t" style="left:268.02px;top:232.67px;font-size:9.6px;color:#fff;line-height:12px;transform:scaleX(0.9300);transform-origin:0 0;">Perspective</div>
<svg style="left:348px;top:196px;" width="24" height="24" viewBox="0 0 24 24"><path d="M12 0 C11 3 1.5 14 1.5 18 C1.5 21.5 6 24 12 24 C18 24 22.5 21.5 22.5 18 C22.5 14 13 3 12 0Z" fill="#a6a6a6"/></svg>
<div class="t" style="left:348.81px;top:226.67px;font-size:9.6px;color:#fff;line-height:12px;transform:scaleX(0.9300);transform-origin:0 0;">Cone</div>
<svg style="left:76px;top:248px;" width="24" height="24" viewBox="0 0 24 24"><path d="M12 0.5 L22.5 6 L12 11.5 L1.5 6Z M1.5 7.5 L11.3 12.8 V24 L1.5 18.5Z M22.5 7.5 L12.7 12.8 V24 L22.5 18.5Z" fill="#a6a6a6"/></svg>
<div class="t" style="left:76.80px;top:278.67px;font-size:9.6px;color:#fff;line-height:12px;transform:scaleX(0.9300);transform-origin:0 0;">Cube</div>
<svg style="left:144px;top:248px;" width="24" height="24" viewBox="0 0 24 24"><defs><clipPath id="cmc"><circle cx="12" cy="12" r="8"/></clipPath></defs><g clip-path="url(#cmc)" stroke="#a6a6a6" stroke-width="2.6" fill="none"><path d="M0 9 L24 1 M0 14.5 L24 6.5 M0 20 L24 12 M0 25.5 L24 17.5"/></g><circle cx="9.5" cy="8" r="2" fill="#323232"/></svg>
<div class="t" style="left:140.20px;top:272.67px;font-size:9.6px;color:#fff;line-height:12px;transform:scaleX(0.9300);transform-origin:0 0;">Custom</div>
<div class="t" style="left:139.60px;top:284.67px;font-size:9.6px;color:#fff;line-height:12px;transform:scaleX(0.9300);transform-origin:0 0;">Material</div>
<svg style="left:212px;top:248px;" width="24" height="24" viewBox="0 0 24 24"><path d="M3.5 5.5 C3.5 -0.8 20.5 -0.8 20.5 5.5 C20.5 10.5 3.5 10.5 3.5 5.5Z M3.5 9 C6 12.6 18 12.6 20.5 9 V19 C20.5 25 3.5 25 3.5 19Z" fill="#a6a6a6"/></svg>
<div class="t" style="left:206.99px;top:278.67px;font-size:9.6px;color:#fff;line-height:12px;transform:scaleX(0.9300);transform-origin:0 0;">Cylinder</div>
<svg style="left:280px;top:248px;" width="24" height="24" viewBox="0 0 24 24"><circle cx="12" cy="12" r="11.5" fill="#a6a6a6"/><circle cx="8.5" cy="8" r="3" fill="#323232"/></svg>
<div class="t" style="left:260.21px;top:278.67px;font-size:9.6px;color:#fff;line-height:12px;transform:scaleX(0.9300);transform-origin:0 0;">Default Material</div>
<svg style="left:348px;top:248px;" width="24" height="24" viewBox="0 0 24 24"><text x="11.5" y="19" font-size="18" font-style="italic" font-weight="bold" fill="#a6a6a6" text-anchor="middle" font-family="Liberation Sans, sans-serif" letter-spacing="-0.5">fx</text></svg>
<div class="t" style="left:347.88px;top:278.67px;font-size:9.6px;color:#fff;line-height:12px;transform:scaleX(0.9300);transform-origin:0 0;">Effect</div>
<svg style="left:76px;top:300px;" width="24" height="24" viewBox="0 0 24 24"><path d="M13.8 0.3 L23.5 3.1 V19.6 L13.8 15.5Z" fill="#a6a6a6"/><path d="M7.4 2.2 L18 5.8 V20.5 L7.4 16.9Z" fill="#a6a6a6" stroke="#323232" stroke-width="1.2"/><path d="M0.4 5.8 L11.6 8.6 V24.2 L0.4 19.6Z" fill="#a6a6a6" stroke="#323232" stroke-width="1.2"/></svg>
<div class="t" style="left:75.08px;top:330.67px;font-size:9.6px;color:#fff;line-height:12px;transform:scaleX(0.9300);transform-origin:0 0;">Group</div>
<svg style="left:144px;top:300px;" width="24" height="24" viewBox="0 0 24 24"><path d="M13.8 0.3 L23.5 3.1 V19.6 L13.8 15.5Z" fill="#a6a6a6"/><path d="M7.4 2.2 L18 5.8 V20.5 L7.4 16.9Z" fill="#a6a6a6" stroke="#323232" stroke-width="1.2"/><path d="M0.4 5.8 L11.6 8.6 V24.2 L0.4 19.6Z" fill="#a6a6a6" stroke="#323232" stroke-width="1.2"/></svg>
<div class="t" style="left:130.11px;top:330.67px;font-size:9.6px;color:#fff;line-height:12px;transform:scaleX(0.9300);transform-origin:0 0;">Instance List</div>
<svg style="left:212px;top:300px;" width="24" height="24" viewBox="0 0 24 24"><path d="M13.8 0.3 L23.5 3.1 V19.6 L13.8 15.5Z" fill="#a6a6a6"/><path d="M7.4 2.2 L18 5.8 V20.5 L7.4 16.9Z" fill="#a6a6a6" stroke="#323232" stroke-width="1.2"/><path d="M0.4 5.8 L11.6 8.6 V24.2 L0.4 19.6Z" fill="#a6a6a6" stroke="#323232" stroke-width="1.2"/></svg>
<div class="t" style="left:198.11px;top:324.67px;font-size:9.6px;color:#fff;line-height:12px;transform:scaleX(0.9300);transform-origin:0 0;">Instance List</div>
<div class="t" style="left:212.76px;top:336.67px;font-size:9.6px;color:#fff;line-height:12px;transform:scaleX(0.9300);transform-origin:0 0;">Entry</div>
<svg style="left:280px;top:300px;" width="24" height="24" viewBox="0 0 24 24"><path d="M13.8 0.3 L23.5 3.1 V19.6 L13.8 15.5Z" fill="#a6a6a6"/><path d="M7.4 2.2 L18 5.8 V20.5 L7.4 16.9Z" fill="#a6a6a6" stroke="#323232" stroke-width="1.2"/><path d="M0.4 5.8 L11.6 8.6 V24.2 L0.4 19.6Z" fill="#a6a6a6" stroke="#323232" stroke-width="1.2"/></svg>
<div class="t" style="left:271.04px;top:330.67px;font-size:9.6px;color:#fff;line-height:12px;transform:scaleX(0.9300);transform-origin:0 0;">Instancing</div>
<svg style="left:348px;top:300px;" width="24" height="24" viewBox="0 0 24 24"><path d="M13.8 0.3 L23.5 3.1 V19.6 L13.8 15.5Z" fill="#a6a6a6"/><path d="M7.4 2.2 L18 5.8 V20.5 L7.4 16.9Z" fill="#a6a6a6" stroke="#323232" stroke-width="1.2"/><path d="M0.4 5.8 L11.6 8.6 V24.2 L0.4 19.6Z" fill="#a6a6a6" stroke="#323232" stroke-width="1.2"/></svg>
<div class="t" style="left:350.06px;top:330.67px;font-size:9.6px;color:#fff;line-height:12px;transform:scaleX(0.9300);transform-origin:0 0;">Joint</div>
<svg style="left:76px;top:352px;" width="24" height="24" viewBox="0 0 24 24"><circle cx="12" cy="12" r="4.2" fill="#a6a6a6"/><g stroke="#a6a6a6" stroke-width="1.4"><path d="M17.70 12.00 L23.50 12.00"/><path d="M16.03 16.03 L20.13 20.13"/><path d="M12.00 17.70 L12.00 23.50"/><path d="M7.97 16.03 L3.87 20.13"/><path d="M6.30 12.00 L0.50 12.00"/><path d="M7.97 7.97 L3.87 3.87"/><path d="M12.00 6.30 L12.00 0.50"/><path d="M16.03 7.97 L20.13 3.87"/></g></svg>
<div class="t" style="left:55.46px;top:382.67px;font-size:9.6px;color:#fff;line-height:12px;transform:scaleX(0.9300);transform-origin:0 0;">Light Directional</div>
<svg style="left:144px;top:352px;" width="24" height="24" viewBox="0 0 24 24"><circle cx="12" cy="12" r="3.6" fill="#a6a6a6"/><g stroke="#a6a6a6" stroke-width="1.4"><path d="M17.10 12.00 L22.00 12.00"/><path d="M15.61 15.61 L19.07 19.07"/><path d="M12.00 17.10 L12.00 22.00"/><path d="M8.39 15.61 L4.93 19.07"/><path d="M6.90 12.00 L2.00 12.00"/><path d="M8.39 8.39 L4.93 4.93"/><path d="M12.00 6.90 L12.00 2.00"/><path d="M15.61 8.39 L19.07 4.93"/></g></svg>
<div class="t" style="left:134.11px;top:382.67px;font-size:9.6px;color:#fff;line-height:12px;transform:scaleX(0.9300);transform-origin:0 0;">Light Point</div>
<svg style="left:212px;top:352px;" width="24" height="24" viewBox="0 0 24 24"><path d="M12 0.5 C15.5 0.5 18 5 18 9.5 C18 13.5 15.5 16 12 16 C8.5 16 6 13.5 6 9.5 C6 5 8.5 0.5 12 0.5Z" fill="#a6a6a6"/><g stroke="#a6a6a6" stroke-width="1.2"><path d="M12 18 V23.5 M8.5 17.5 L6.5 22.5 M15.5 17.5 L17.5 22.5"/></g></svg>
<div class="t" style="left:203.09px;top:382.67px;font-size:9.6px;color:#fff;line-height:12px;transform:scaleX(0.9300);transform-origin:0 0;">Light Spot</div>
<svg style="left:280px;top:352px;" width="24" height="24" viewBox="0 0 24 24"><text x="12" y="18" font-size="15" fill="#5c5c5c" text-anchor="middle" font-family="Liberation Sans, sans-serif">3d</text></svg>
<div class="t" style="left:271.78px;top:382.67px;font-size:9.6px;color:#fff;line-height:12px;transform:scaleX(0.9300);transform-origin:0 0;">Loader3D</div>
<svg style="left:348px;top:352px;" width="24" height="24" viewBox="0 0 24 24"><path d="M13.8 0.3 L23.5 3.1 V19.6 L13.8 15.5Z" fill="#a6a6a6"/><path d="M7.4 2.2 L18 5.8 V20.5 L7.4 16.9Z" fill="#a6a6a6" stroke="#323232" stroke-width="1.2"/><path d="M0.4 5.8 L11.6 8.6 V24.2 L0.4 19.6Z" fill="#a6a6a6" stroke="#323232" stroke-width="1.2"/></svg>
<div class="t" style="left:333.00px;top:382.67px;font-size:9.6px;color:#fff;line-height:12px;transform:scaleX(0.9300);transform-origin:0 0;">Morph Target</div>
<svg style="left:76px;top:404px;" width="24" height="24" viewBox="0 0 24 24"><path d="M4 2 L20 9 V22 L4 14.5Z" fill="#a6a6a6"/></svg>
<div class="t" style="left:75.92px;top:434.67px;font-size:9.6px;color:#fff;line-height:12px;transform:scaleX(0.9300);transform-origin:0 0;">Plane</div>
<svg style="left:144px;top:404px;" width="24" height="24" viewBox="0 0 24 24"><circle cx="12" cy="12" r="11.5" fill="#a6a6a6"/><circle cx="8.5" cy="8" r="3" fill="#323232"/></svg>
<div class="t" style="left:135.83px;top:428.67px;font-size:9.6px;color:#fff;line-height:12px;transform:scaleX(0.9300);transform-origin:0 0;">Principled</div>
<div class="t" style="left:139.60px;top:440.67px;font-size:9.6px;color:#fff;line-height:12px;transform:scaleX(0.9300);transform-origin:0 0;">Material</div>
<svg style="left:212px;top:404px;" width="24" height="24" viewBox="0 0 24 24"><text x="12" y="18" font-size="15" fill="#8a8a8a" text-anchor="middle" font-family="Liberation Sans, sans-serif">3d</text></svg>
<div class="t" style="left:199.32px;top:434.67px;font-size:9.6px;color:#fff;line-height:12px;transform:scaleX(0.9300);transform-origin:0 0;">Repeater3D</div>
<svg style="left:280px;top:404px;" width="24" height="24" viewBox="0 0 24 24"><path d="M1 1 H23 V23 H1Z" fill="#a6a6a6"/><path d="M23 11 L12.5 11.5 L16.5 18Z" fill="#323232"/></svg>
<div class="t" style="left:278.81px;top:428.67px;font-size:9.6px;color:#fff;line-height:12px;transform:scaleX(0.9300);transform-origin:0 0;">Scene</div>
<div class="t" style="left:266.16px;top:440.67px;font-size:9.6px;color:#fff;line-height:12px;transform:scaleX(0.9300);transform-origin:0 0;">Environment</div>
<svg style="left:348px;top:404px;" width="24" height="24" viewBox="0 0 24 24"><path d="M13.8 0.3 L23.5 3.1 V19.6 L13.8 15.5Z" fill="#a6a6a6"/><path d="M7.4 2.2 L18 5.8 V20.5 L7.4 16.9Z" fill="#a6a6a6" stroke="#323232" stroke-width="1.2"/><path d="M0.4 5.8 L11.6 8.6 V24.2 L0.4 19.6Z" fill="#a6a6a6" stroke="#323232" stroke-width="1.2"/></svg>
<div class="t" style="left:342.20px;top:434.67px;font-size:9.6px;color:#fff;line-height:12px;transform:scaleX(0.9300);transform-origin:0 0;">Skeleton</div>
<svg style="left:76px;top:456px;" width="24" height="24" viewBox="0 0 24 24"><circle cx="12" cy="12" r="11.5" fill="#a6a6a6"/></svg>
<div class="t" style="left:73.08px;top:486.67px;font-size:9.6px;color:#fff;line-height:12px;transform:scaleX(0.9300);transform-origin:0 0;">Sphere</div>
<svg style="left:144px;top:456px;" width="24" height="24" viewBox="0 0 24 24"><path d="M1 4 H23 V22 H1Z" fill="#a6a6a6"/><path d="M6 4 L12 10.5 L18 4" fill="#323232"/></svg>
<div class="t" style="left:140.95px;top:486.67px;font-size:9.6px;color:#fff;line-height:12px;transform:scaleX(0.9300);transform-origin:0 0;">Texture</div>
<svg style="left:212px;top:456px;" width="24" height="24" viewBox="0 0 24 24"><path d="M1 9 H23 V22 H1Z" fill="#a6a6a6"/><path d="M1 5.5 L23 1.5 V3.5 L1 7.5Z" fill="#a6a6a6"/></svg>
<div class="t" style="left:208.39px;top:486.67px;font-size:9.6px;color:#fff;line-height:12px;transform:scaleX(0.9300);transform-origin:0 0;">View3D</div>
<div style="left:53px;top:515px;width:342px;height:1px;background:#1c1c1c;"></div>
<svg style="left:52px;top:524px;" width="9" height="6" viewBox="0 0 9 6"><path d="M0 0.5 H8 L4 5Z" fill="#c8c8c8"/></svg>
<div class="t" style="left:69.65px;top:519.44px;font-size:12px;color:#fff;line-height:16px;transform:scaleX(0.8950);transform-origin:0 0;">QT QUICK 3D CUSTOM SHADER UTILS (6)</div>
<div style="left:48px;top:540px;width:352px;height:47px;overflow:hidden;"><svg style="left:28px;top:11px;" width="24" height="24" viewBox="0 0 24 24"><defs><clipPath id="gcc0"><circle cx="12" cy="12" r="8.5"/></clipPath></defs><circle cx="12" cy="12" r="8.5" fill="none" stroke="#a6a6a6" stroke-width="1.2"/><g clip-path="url(#gcc0)" stroke="#a6a6a6" stroke-width="1" shape-rendering="crispEdges"><path d="M5.5 0 V24 M0 5.5 H24"/><path d="M8.5 0 V24 M0 8.5 H24"/><path d="M11.5 0 V24 M0 11.5 H24"/><path d="M14.5 0 V24 M0 14.5 H24"/><path d="M17.5 0 V24 M0 17.5 H24"/></g></svg>
<div class="t" style="left:27.41px;top:41.92px;font-size:9.6px;color:#fff;line-height:12px;transform:scaleX(0.9300);transform-origin:0 0;">Buffer</div>
<svg style="left:96px;top:11px;" width="24" height="24" viewBox="0 0 24 24"><path d="M3.5 3.5 H20.5 V20.5 H3.5Z" fill="#a6a6a6"/><g stroke="#323232" stroke-width="1.3"><path d="M7 9 H17 M7 12 H17 M7 15 H13"/></g></svg>
<div class="t" style="left:84.20px;top:41.92px;font-size:9.6px;color:#fff;line-height:12px;transform:scaleX(0.9300);transform-origin:0 0;">Buffer Input</div>
<svg style="left:164px;top:11px;" width="24" height="24" viewBox="0 0 24 24"><defs><clipPath id="gcc2"><circle cx="12" cy="12" r="8.5"/></clipPath></defs><circle cx="12" cy="12" r="8.5" fill="none" stroke="#a6a6a6" stroke-width="1.2"/><g clip-path="url(#gcc2)" stroke="#a6a6a6" stroke-width="1" shape-rendering="crispEdges"><path d="M5.5 0 V24 M0 5.5 H24"/><path d="M8.5 0 V24 M0 8.5 H24"/><path d="M11.5 0 V24 M0 11.5 H24"/><path d="M14.5 0 V24 M0 14.5 H24"/><path d="M17.5 0 V24 M0 17.5 H24"/></g></svg>
<div class="t" style="left:165.41px;top:41.92px;font-size:9.6px;color:#fff;line-height:12px;transform:scaleX(0.9300);transform-origin:0 0;">Pass</div>
<svg style="left:232px;top:11px;" width="24" height="24" viewBox="0 0 24 24"><path d="M3.5 3.5 H20.5 V20.5 H3.5Z" fill="#a6a6a6"/><g stroke="#323232" stroke-width="1.3"><path d="M7 9 H17 M7 12 H17 M7 15 H13"/></g></svg>
<div class="t" style="left:220.02px;top:35.92px;font-size:9.6px;color:#fff;line-height:12px;transform:scaleX(0.9300);transform-origin:0 0;">Set Uniform</div>
<div class="t" style="left:232.57px;top:47.92px;font-size:9.6px;color:#fff;line-height:12px;transform:scaleX(0.9300);transform-origin:0 0;">Value</div>
<svg style="left:300px;top:11px;" width="24" height="24" viewBox="0 0 24 24"><defs><clipPath id="gcc4"><circle cx="12" cy="12" r="8.5"/></clipPath></defs><circle cx="12" cy="12" r="8.5" fill="none" stroke="#a6a6a6" stroke-width="1.2"/><g clip-path="url(#gcc4)" stroke="#a6a6a6" stroke-width="1" shape-rendering="crispEdges"><path d="M5.5 0 V24 M0 5.5 H24"/><path d="M8.5 0 V24 M0 8.5 H24"/><path d="M11.5 0 V24 M0 11.5 H24"/><path d="M14.5 0 V24 M0 14.5 H24"/><path d="M17.5 0 V24 M0 17.5 H24"/></g></svg>
<div class="t" style="left:296.95px;top:41.92px;font-size:9.6px;color:#fff;line-height:12px;transform:scaleX(0.9300);transform-origin:0 0;">Shader</div>
</div>
<div style="left:400px;top:139px;width:10px;height:449px;background:#3f3f3f;"></div>
<div style="left:400px;top:369px;width:10px;height:168px;background:#525252;"></div>
<div style="left:410px;top:139px;width:1px;height:826px;background:#585858;"></div>
<svg style="left:411px;top:139px;overflow:hidden" width="1075" height="658" viewBox="0 0 1075 658"><defs><linearGradient id="gbg" x1="0" y1="0" x2="0" y2="1"><stop offset="0" stop-color="#8e8e8e"/><stop offset="0.25" stop-color="#787878"/><stop offset="0.45" stop-color="#5e5e5e"/><stop offset="0.7" stop-color="#3e3e3e"/><stop offset="0.85" stop-color="#2f2f2f"/><stop offset="1" stop-color="#222222"/></linearGradient></defs><rect x="0" y="0" width="1075" height="658" fill="url(#gbg)"/><path d="M0 624.04H1075M0 561.35H1075M0 506.33H1075M0 457.65H1075M0 414.27H1075M0 375.38H1075M0 340.31H1075M0 308.53H1075M0 279.59H1075M0 253.13H1075M0 228.85H1075M0 206.48H1075M0 185.81H1075M0 166.64H1075M0 148.84H1075M0 132.24H1075M0 116.74H1075M0 102.23H1075M0 88.61H1075M0 75.81H1075M0 63.76H1075M0 52.39H1075M0 41.64H1075M0 31.47H1075M0 21.83H1075M0 12.68H1075M0 3.99H1075" stroke="#aaaaaa" stroke-opacity="0.25" stroke-width="1" fill="none" shape-rendering="crispEdges"/><path d="M21.79 0L-980.67 658M43.74 0L-916.07 658M65.68 0L-851.47 658M87.63 0L-786.86 658M109.57 0L-722.26 658M131.52 0L-657.66 658M153.46 0L-593.05 658M175.41 0L-528.45 658M197.35 0L-463.85 658M219.30 0L-399.24 658M241.24 0L-334.64 658M263.19 0L-270.04 658M285.13 0L-205.44 658M307.08 0L-140.83 658M329.02 0L-76.23 658M350.97 0L-11.63 658M372.91 0L52.98 658M394.86 0L117.58 658M416.80 0L182.18 658M658.20 0L892.82 658M680.14 0L957.42 658M702.09 0L1022.02 658M724.03 0L1086.63 658M745.98 0L1151.23 658M767.92 0L1215.83 658M789.87 0L1280.44 658M811.81 0L1345.04 658M833.76 0L1409.64 658M855.70 0L1474.24 658M877.65 0L1538.85 658M899.59 0L1603.45 658M921.54 0L1668.05 658M943.48 0L1732.66 658M965.43 0L1797.26 658M987.37 0L1861.86 658M1009.32 0L1926.47 658M1031.26 0L1991.07 658M1053.21 0L2055.67 658" stroke="#aaaaaa" stroke-opacity="0.25" stroke-width="1" fill="none"/><path d="M438.75 0L246.79 658M460.69 0L311.39 658M482.64 0L375.99 658M504.58 0L440.60 658M526.53 0L505.20 658M548.47 0L569.80 658M570.42 0L634.40 658M592.36 0L699.01 658M614.31 0L763.61 658M636.25 0L828.21 658" stroke="#aaaaaa" stroke-opacity="0.25" stroke-width="1" fill="none" shape-rendering="crispEdges"/><path d="M0 658.79H1075M0 591.64H1075M0 532.97H1075M0 481.27H1075M0 435.35H1075M0 394.31H1075M0 357.41H1075M0 324.04H1075M0 293.73H1075M0 266.07H1075M0 240.74H1075M0 217.44H1075M0 195.94H1075M0 176.05H1075M0 157.58H1075M0 140.40H1075M0 124.36H1075M0 109.37H1075M0 95.31H1075M0 82.12H1075M0 69.70H1075M0 57.99H1075M0 46.94H1075M0 36.49H1075M0 26.59H1075M0 17.20H1075M0 8.28H1075M0 -0.20H1075M427.78 0L214.48 658M449.72 0L279.09 658M471.67 0L343.69 658M493.61 0L408.29 658M515.56 0L472.90 658M559.44 0L602.10 658M581.39 0L666.71 658M603.33 0L731.31 658M625.28 0L795.91 658M647.22 0L860.52 658" stroke="#b2b2b2" stroke-width="1" fill="none" shape-rendering="crispEdges"/><path d="M10.82 0L-1012.97 658M32.77 0L-948.37 658M54.71 0L-883.77 658M76.66 0L-819.16 658M98.60 0L-754.56 658M120.55 0L-689.96 658M142.49 0L-625.36 658M164.44 0L-560.75 658M186.38 0L-496.15 658M208.33 0L-431.55 658M230.27 0L-366.94 658M252.22 0L-302.34 658M274.16 0L-237.74 658M296.11 0L-173.13 658M318.05 0L-108.53 658M340.00 0L-43.93 658M361.94 0L20.68 658M383.89 0L85.28 658M405.83 0L149.88 658M669.17 0L925.12 658M691.11 0L989.72 658M713.06 0L1054.32 658M735.00 0L1118.93 658M756.95 0L1183.53 658M778.89 0L1248.13 658M800.84 0L1312.74 658M822.78 0L1377.34 658M844.73 0L1441.94 658M866.67 0L1506.55 658M888.62 0L1571.15 658M910.56 0L1635.75 658M932.51 0L1700.36 658M954.45 0L1764.96 658M976.40 0L1829.56 658M998.34 0L1894.16 658M1020.29 0L1958.77 658M1042.23 0L2023.37 658M1064.18 0L2087.97 658" stroke="#b6b6b6" stroke-width="0.95" fill="none"/><path d="M0 293.5H1075" stroke="#cc2228" stroke-width="1" shape-rendering="crispEdges"/><path d="M537.5 0V658" stroke="#1ea6d6" stroke-width="1" shape-rendering="crispEdges"/><path d="M1022 0 H1028.5 V4.5 Q1029.5 5.5 1029.5 7.5 Q1029.5 11.3 1025.2 11.3 Q1021 11.3 1021 7.5 Q1021 5.5 1022 4.5Z" fill="#0000ff"/></svg>
<div style="left:48px;top:587px;width:362px;height:18px;background:#1f1f1f;"></div>
<div style="left:48px;top:605px;width:362px;height:2px;background:#2aafd3;"></div>
<div style="left:48px;top:587px;width:74px;height:18px;background:#2aafd3;"></div>
<div class="t" style="left:55.11px;top:588.84px;font-size:12px;color:#1a1a1a;line-height:16px;transform:scaleX(0.9929);transform-origin:0 0;">Projects</div>
<svg style="left:106px;top:591px;" width="11" height="11" viewBox="0 0 11 11"><path d="M0.5 0.5 L10.5 10.5 M10.5 0.5 L0.5 10.5" stroke="#1a1a1a" stroke-width="1" fill="none"/></svg>
<div style="left:122px;top:589px;width:1px;height:15px;background:#3c3c3c;"></div>
<div class="t" style="left:129.14px;top:588.84px;font-size:12px;color:#fff;line-height:16px;transform:scaleX(0.9574);transform-origin:0 0;">File System</div>
<svg style="left:197px;top:591px;" width="11" height="11" viewBox="0 0 11 11"><path d="M0.5 0.5 L10.5 10.5 M10.5 0.5 L0.5 10.5" stroke="#e0e0e0" stroke-width="1" fill="none"/></svg>
<div style="left:212px;top:589px;width:1px;height:15px;background:#3c3c3c;"></div>
<div class="t" style="left:221.50px;top:588.84px;font-size:12px;color:#fff;line-height:16px;transform:scaleX(0.9946);transform-origin:0 0;">Open Documents</div>
<svg style="left:322px;top:591px;" width="11" height="11" viewBox="0 0 11 11"><path d="M0.5 0.5 L10.5 10.5 M10.5 0.5 L0.5 10.5" stroke="#e0e0e0" stroke-width="1" fill="none"/></svg>
<div style="left:337px;top:589px;width:1px;height:15px;background:#3c3c3c;"></div>
<svg style="left:360.5px;top:591px;" width="11" height="11" viewBox="0 0 11 11"><path d="M0.5 2 L5.5 9.5 L10.5 2" stroke="#d8d8d8" stroke-width="1" fill="none"/></svg>
<svg style="left:377.5px;top:591px;" width="11" height="11" viewBox="0 0 11 11"><path d="M0.5 4.5 H6.5 V10.5 H0.5Z M3.5 4.5 V0.5 H10.5 V7.5 H6.5" stroke="#d8d8d8" stroke-width="1" fill="none"/></svg>
<svg style="left:394.5px;top:591px;" width="11" height="11" viewBox="0 0 11 11"><path d="M0.5 0.5 L10.5 10.5 M10.5 0.5 L0.5 10.5" stroke="#d8d8d8" stroke-width="1" fill="none"/></svg>
<div style="left:48px;top:607px;width:352px;height:122px;background:#313131;"></div>
<div style="left:138px;top:627px;width:262px;height:20px;background:#294661;border:1px dotted #dfe7ee;box-sizing:border-box;"></div>
<svg style="left:105px;top:613px;" width="11" height="8" viewBox="0 0 11 8"><path d="M1 1.5 L5.5 6 L10 1.5" stroke="#151515" stroke-width="1.6" fill="none"/></svg>
<svg style="left:124px;top:608px;" width="14" height="17" viewBox="0 0 14 17"><path d="M0.5 0.5 H11.5 V6.5 H13.5 V16.5 H0.5Z" fill="#fbd975"/><path d="M11.5 6.5 H13.5 V16.5 H11.5Z" fill="#f5c84e"/></svg>
<div class="t q" style="left:145px;top:609px;font-size:12px;color:#fff;line-height:16px;">/</div>
<svg style="left:142px;top:628.5px;" width="15" height="17" viewBox="0 0 15 17"><path d="M1.5 0.5 H9.5 L13.5 4.5 V16.5 H1.5Z" fill="#a9cdee" stroke="#9a9a9a" stroke-width="0.6"/><path d="M9.5 0.5 V4.5 H13.5" fill="#d8d8d8" stroke="#9a9a9a" stroke-width="0.6"/><text x="1.6" y="14.6" font-size="9.5" font-weight="bold" fill="#0f7f90" font-family="Liberation Sans, sans-serif" textLength="12.6" lengthAdjust="spacingAndGlyphs">qml</text></svg>
<div class="t" style="left:162.58px;top:629.84px;font-size:12px;color:#fff;line-height:16px;transform:scaleX(1.0361);transform-origin:0 0;">CustomMaterial.qml</div>
<svg style="left:142px;top:648.5px;" width="15" height="17" viewBox="0 0 15 17"><path d="M1.5 0.5 H9.5 L13.5 4.5 V16.5 H1.5Z" fill="#fbfbfb" stroke="#9a9a9a" stroke-width="0.6"/><path d="M9.5 0.5 V4.5 H13.5" fill="#d8d8d8" stroke="#9a9a9a" stroke-width="0.6"/><text x="1.6" y="14.6" font-size="9.5" font-weight="bold" fill="#0f7f90" font-family="Liberation Sans, sans-serif" textLength="12.6" lengthAdjust="spacingAndGlyphs">qml</text></svg>
<div class="t" style="left:162.58px;top:649.84px;font-size:12px;color:#fff;line-height:16px;transform:scaleX(1.0259);transform-origin:0 0;">CylinderMaterial.qml</div>
<svg style="left:142px;top:668.5px;" width="15" height="17" viewBox="0 0 15 17"><path d="M1.5 0.5 H9.5 L13.5 4.5 V16.5 H1.5Z" fill="#fbfbfb" stroke="#9a9a9a" stroke-width="0.6"/><path d="M9.5 0.5 V4.5 H13.5" fill="#d8d8d8" stroke="#9a9a9a" stroke-width="0.6"/><text x="1.6" y="14.6" font-size="9.5" font-weight="bold" fill="#0f7f90" font-family="Liberation Sans, sans-serif" textLength="12.6" lengthAdjust="spacingAndGlyphs">qml</text></svg>
<div class="t" style="left:162.45px;top:669.84px;font-size:12px;color:#fff;line-height:16px;transform:scaleX(1.0763);transform-origin:0 0;">main.qml</div>
<svg style="left:71px;top:692px;" width="8" height="11" viewBox="0 0 8 11"><path d="M1.5 1 L6 5.5 L1.5 10" stroke="#151515" stroke-width="1.6" fill="none"/></svg>
<svg style="left:89px;top:688px;" width="14" height="17" viewBox="0 0 14 17"><path d="M0.5 0.5 H11.5 V2.5 H13.5 V16.5 H0.5Z" fill="#fbd975"/></svg>
<svg style="left:92px;top:693px;" width="11" height="11" viewBox="0 0 11 11"><g fill="#f4f4f4" stroke="#555" stroke-width="0.8"><path d="M3.5 1 H7.5 L9.5 3 V7.5 H3.5Z"/><path d="M0.8 3.5 H4.8 L6.5 5.2 V10 H0.8Z"/></g></svg>
<div class="t" style="left:109.73px;top:690.24px;font-size:12px;color:#fff;line-height:16px;transform:scaleX(0.9485);transform-origin:0 0;">&lt;File System&gt;</div>
<svg style="left:71px;top:712px;" width="8" height="11" viewBox="0 0 8 11"><path d="M1.5 1 L6 5.5 L1.5 10" stroke="#151515" stroke-width="1.6" fill="none"/></svg>
<svg style="left:89px;top:708px;" width="14" height="17" viewBox="0 0 14 17"><path d="M0.5 0.5 H11.5 V2.5 H13.5 V16.5 H0.5Z" fill="#fbd975"/></svg>
<svg style="left:91px;top:713px;" width="13" height="11" viewBox="0 0 13 11"><path d="M1 5 L6 3 L12 4.5 L12 8.5 L6.5 10.5 L1 9Z" fill="#3f9c35"/><path d="M1 5 L6 3 L12 4.5 L6.5 6.5Z" fill="#7ed06f"/><path d="M6.5 6.5 V10.5 M3.7 5.7 V9.7 M9.2 5.5 V9.6" stroke="#2a6e23" stroke-width="0.7"/></svg>
<div class="t" style="left:109.00px;top:710.24px;font-size:12px;color:#fff;line-height:16px;">CMake Modules</div>
<div style="left:400px;top:607px;width:10px;height:122px;background:#4f4f4f;"></div>
<div style="left:400px;top:607px;width:10px;height:56px;background:conic-gradient(#f0f0f0 25%,#7d7d7d 0 50%,#f0f0f0 0 75%,#7d7d7d 0) 0 0/2px 2px;"></div>
<div style="left:48px;top:729px;width:362px;height:1px;background:#444;"></div>
<div style="left:48px;top:730px;width:362px;height:17px;background:#1f1f1f;"></div>
<div style="left:48px;top:730px;width:83px;height:17px;background:#d9d9d9;"></div>
<div class="t" style="left:55.48px;top:730.64px;font-size:12px;color:#1a1a1a;line-height:16px;transform:scaleX(1.0239);transform-origin:0 0;">Navigator</div>
<svg style="left:115px;top:733px;" width="11" height="11" viewBox="0 0 11 11"><path d="M0.5 0.5 L10.5 10.5 M10.5 0.5 L0.5 10.5" stroke="#1a1a1a" stroke-width="1" fill="none"/></svg>
<svg style="left:360.5px;top:733px;" width="11" height="11" viewBox="0 0 11 11"><path d="M0.5 2 L5.5 9.5 L10.5 2" stroke="#d8d8d8" stroke-width="1" fill="none"/></svg>
<svg style="left:377.5px;top:733px;" width="11" height="11" viewBox="0 0 11 11"><path d="M0.5 4.5 H6.5 V10.5 H0.5Z M3.5 4.5 V0.5 H10.5 V7.5 H6.5" stroke="#d8d8d8" stroke-width="1" fill="none"/></svg>
<svg style="left:394.5px;top:733px;" width="11" height="11" viewBox="0 0 11 11"><path d="M0.5 0.5 L10.5 10.5 M10.5 0.5 L0.5 10.5" stroke="#d8d8d8" stroke-width="1" fill="none"/></svg>
<div style="left:48px;top:747px;width:362px;height:2px;background:#ededed;"></div>
<div style="left:48px;top:749px;width:362px;height:24px;background:#3d3e40;"></div>
<svg style="left:53px;top:755px;" width="13" height="12" viewBox="0 0 13 12"><path d="M12.5 6 H1 M6 1 L1 6 L6 11" stroke="#c8c8c8" stroke-width="1" fill="none"/></svg>
<svg style="left:76px;top:755px;" width="13" height="12" viewBox="0 0 13 12"><path d="M0.5 6 H12 M7 1 L12 6 L7 11" stroke="#c8c8c8" stroke-width="1" fill="none"/></svg>
<svg style="left:99px;top:754px;" width="12" height="13" viewBox="0 0 12 13"><path d="M6 0.5 V12 M1 7 L6 12 L11 7" stroke="#c8c8c8" stroke-width="1" fill="none"/></svg>
<svg style="left:122px;top:754px;" width="12" height="13" viewBox="0 0 12 13"><path d="M6 12.5 V1 M1 6 L6 1 L11 6" stroke="#c8c8c8" stroke-width="1" fill="none"/></svg>
<svg style="left:145px;top:755px;" width="14" height="12" viewBox="0 0 14 12"><path d="M0.5 0.5 H10.5 L6.8 5 V10.5 L4.2 9 V5Z" fill="#c8c8c8"/><path d="M9.5 9 H13 L11.2 11Z" fill="#c8c8c8"/></svg>
<div style="left:48px;top:773px;width:363px;height:192px;background:#323232;"></div>
<div style="left:48px;top:775px;width:363px;height:20px;background:#1f1f1f;"></div>
<svg style="left:51px;top:777px;" width="16" height="16" viewBox="0 0 16 16"><g stroke="#d8d8d8" stroke-width="1.1" fill="none"><path d="M0.5 4 V0.5 H4 M12 0.5 H15.5 V4 M15.5 12 V15.5 H12 M4 15.5 H0.5 V12"/><rect x="4.5" y="4.5" width="7" height="7"/></g></svg>
<div class="t q" style="left:71px;top:777px;font-size:12px;color:#2aafd3;line-height:16px;">Item</div>
<div style="left:411px;top:797px;width:1076px;height:1px;background:#5a5a5a;"></div>
<div style="left:411px;top:798px;width:1076px;height:17px;background:#1f1f1f;"></div>
<div style="left:411px;top:798px;width:62px;height:17px;background:#d9d9d9;"></div>
<div class="t" style="left:418.33px;top:798.84px;font-size:12px;color:#1a1a1a;line-height:16px;transform:scaleX(0.9426);transform-origin:0 0;">States</div>
<svg style="left:458px;top:801px;" width="11" height="11" viewBox="0 0 11 11"><path d="M0.5 0.5 L10.5 10.5 M10.5 0.5 L0.5 10.5" stroke="#1a1a1a" stroke-width="1" fill="none"/></svg>
<div class="t" style="left:482.60px;top:798.84px;font-size:12px;color:#fff;line-height:16px;transform:scaleX(0.9910);transform-origin:0 0;">Timeline</div>
<svg style="left:535px;top:801px;" width="11" height="11" viewBox="0 0 11 11"><path d="M0.5 0.5 L10.5 10.5 M10.5 0.5 L0.5 10.5" stroke="#e0e0e0" stroke-width="1" fill="none"/></svg>
<div style="left:550px;top:799px;width:1px;height:15px;background:#3c3c3c;"></div>
<svg style="left:1437px;top:801px;" width="11" height="11" viewBox="0 0 11 11"><path d="M0.5 2 L5.5 9.5 L10.5 2" stroke="#d8d8d8" stroke-width="1" fill="none"/></svg>
<svg style="left:1454px;top:801px;" width="11" height="11" viewBox="0 0 11 11"><path d="M0.5 4.5 H6.5 V10.5 H0.5Z M3.5 4.5 V0.5 H10.5 V7.5 H6.5" stroke="#d8d8d8" stroke-width="1" fill="none"/></svg>
<svg style="left:1471px;top:801px;" width="11" height="11" viewBox="0 0 11 11"><path d="M0.5 0.5 L10.5 10.5 M10.5 0.5 L0.5 10.5" stroke="#d8d8d8" stroke-width="1" fill="none"/></svg>
<div style="left:411px;top:815px;width:1076px;height:2px;background:#ededed;"></div>
<div style="left:411px;top:817px;width:1076px;height:148px;background:#323232;"></div>
<div style="left:411px;top:817px;width:1076px;height:148px;overflow:hidden;"><div style="left:2px;top:2px;width:264px;height:160px;background:#2aafd3;"></div>
<div style="left:16px;top:16px;width:236px;height:160px;background:#323232;border:2px solid #ffe81a;box-sizing:border-box;"></div>
<div style="left:43px;top:22px;width:139px;height:29px;background:#323232;border:1px solid #1c1c1c;box-sizing:border-box;"></div>
<div class="t" style="left:48.63px;top:29.44px;font-size:12px;color:#fff;line-height:16px;transform:scaleX(0.9520);transform-origin:0 0;">base state</div>
<div class="t q" style="left:194px;top:28px;font-size:12.5px;color:#fff;line-height:16px;font-style:italic;">Default</div>
<div style="left:18px;top:55px;width:232px;height:2px;background:#6b6b6b;"></div>
<div style="left:49px;top:72px;width:170px;height:100px;background:#fff;"></div>
<div style="left:929px;top:96px;width:128px;height:80px;background:#323232;border:1px solid #1c1c1c;box-sizing:border-box;"></div>
<div class="t q" style="left:929px;top:128px;font-size:12.5px;color:#fff;width:128px;text-align:center;line-height:16px;font-style:italic;">Create New State</div>
<div style="left:1065px;top:0px;width:11px;height:148px;background:#4e4e4e;"></div>
<div style="left:1066px;top:75px;width:9px;height:73px;background:conic-gradient(#f0f0f0 25%,#6d6d6d 0 50%,#f0f0f0 0 75%,#6d6d6d 0) 0 0/2px 2px;"></div>
</div>
<div style="left:1486px;top:139px;width:1px;height:826px;background:#5a5a5a;"></div>
<div style="left:1487px;top:139px;width:400px;height:826px;background:#323232;"></div>
<div class="t" style="left:1544.37px;top:149.74px;font-size:12px;color:#fff;line-height:16px;transform:scaleX(0.9850);transform-origin:0 0;">Name</div>
<div style="left:1617px;top:142px;width:218px;height:29px;background:#323232;border:1px solid #1c1c1c;box-sizing:border-box;"></div>
<div class="t q" style="left:1617px;top:148px;font-size:12px;color:#fff;width:218px;text-align:center;line-height:16px;">Add Annotation</div>
<div style="left:1487px;top:181px;width:400px;height:21px;background:#1f1f1f;"></div>
<svg style="left:1492px;top:189px;" width="9" height="6" viewBox="0 0 9 6"><path d="M0 0.5 H8 L4 5Z" fill="#c8c8c8"/></svg>
<div class="t" style="left:1508.75px;top:184.54px;font-size:12px;color:#fff;line-height:16px;transform:scaleX(0.9119);transform-origin:0 0;">GEOMETRY - 2D</div>
<div class="t" style="left:1534.13px;top:219.74px;font-size:12px;color:#fff;line-height:16px;transform:scaleX(0.9850);transform-origin:0 0;">Position</div>
<div class="t" style="left:1552.84px;top:253.74px;font-size:12px;color:#fff;line-height:16px;transform:scaleX(0.9850);transform-origin:0 0;">Size</div>
<div class="t" style="left:1532.16px;top:287.74px;font-size:12px;color:#fff;line-height:16px;transform:scaleX(0.9850);transform-origin:0 0;">Rotation</div>
<div class="t" style="left:1546.34px;top:321.74px;font-size:12px;color:#fff;line-height:16px;transform:scaleX(0.9850);transform-origin:0 0;">Scale</div>
<div class="t" style="left:1537.18px;top:355.74px;font-size:12px;color:#fff;line-height:16px;transform:scaleX(0.9850);transform-origin:0 0;">Z stack</div>
<div class="t" style="left:1544.67px;top:389.74px;font-size:12px;color:#fff;line-height:16px;transform:scaleX(0.9850);transform-origin:0 0;">Origin</div>
<div style="left:1617px;top:212.0px;width:86px;height:29px;background:#323232;border:1px solid #1c1c1c;box-sizing:border-box;"></div>
<div class="t q" style="left:1597px;top:219.5px;font-size:12px;color:#fff;width:100px;text-align:right;line-height:16px;">0</div>
<div class="t q" style="left:1711px;top:219.5px;font-size:12px;color:#fff;line-height:16px;">X</div>
<div style="left:1749px;top:212.0px;width:86px;height:29px;background:#323232;border:1px solid #1c1c1c;box-sizing:border-box;"></div>
<div class="t q" style="left:1729px;top:219.5px;font-size:12px;color:#fff;width:100px;text-align:right;line-height:16px;">0</div>
<div class="t q" style="left:1842px;top:219.5px;font-size:12px;color:#fff;line-height:16px;">Y</div>
<div style="left:1617px;top:246.0px;width:86px;height:29px;background:#323232;border:1px solid #1c1c1c;box-sizing:border-box;"></div>
<div class="t q" style="left:1597px;top:253.5px;font-size:12px;color:#fff;width:100px;text-align:right;line-height:16px;">0</div>
<div class="t q" style="left:1711px;top:253.5px;font-size:12px;color:#fff;line-height:16px;">W</div>
<div style="left:1749px;top:246.0px;width:86px;height:29px;background:#323232;border:1px solid #1c1c1c;box-sizing:border-box;"></div>
<div class="t q" style="left:1729px;top:253.5px;font-size:12px;color:#fff;width:100px;text-align:right;line-height:16px;">0</div>
<div class="t q" style="left:1842px;top:253.5px;font-size:12px;color:#fff;line-height:16px;">H</div>
<div style="left:1617px;top:280px;width:86px;height:29px;background:#323232;border:1px solid #1c1c1c;box-sizing:border-box;"></div>
<div class="t q" style="left:1597px;top:287.5px;font-size:12px;color:#fff;width:100px;text-align:right;line-height:16px;">0.00</div>
<div class="t q" style="left:1713px;top:285.5px;font-size:12px;color:#fff;line-height:16px;">°</div>
<div style="left:1617px;top:314px;width:218px;height:29px;background:#323232;border:1px solid #1c1c1c;box-sizing:border-box;"></div>
<div class="t q" style="left:1700px;top:321.5px;font-size:12px;color:#fff;width:100px;text-align:right;line-height:16px;">1.00</div>
<svg style="left:1814px;top:325.5px;" width="13" height="8" viewBox="0 0 13 8"><path d="M0.5 0.5 L6.5 6.5 L12.5 0.5" stroke="#e8e8e8" stroke-width="1" fill="none"/></svg>
<div class="t q" style="left:1842px;top:321.5px;font-size:12px;color:#fff;line-height:16px;">%</div>
<div style="left:1617px;top:348px;width:86px;height:29px;background:#323232;border:1px solid #1c1c1c;box-sizing:border-box;"></div>
<div class="t q" style="left:1597px;top:355.5px;font-size:12px;color:#fff;width:100px;text-align:right;line-height:16px;">0</div>
<div style="left:1617px;top:382px;width:29px;height:29px;background:#323232;border:1px solid #1c1c1c;box-sizing:border-box;"></div>
<div style="left:1627px;top:392px;width:9px;height:9px;background:#2aafd3;"></div>
<div style="left:1487px;top:421px;width:400px;height:21px;background:#1f1f1f;"></div>
<svg style="left:1492px;top:429px;" width="9" height="6" viewBox="0 0 9 6"><path d="M0 0.5 H8 L4 5Z" fill="#c8c8c8"/></svg>
<div class="t" style="left:1509.30px;top:424.54px;font-size:12px;color:#fff;line-height:16px;transform:scaleX(0.8716);transform-origin:0 0;">VISIBILITY</div>
<div class="t" style="left:1532.95px;top:459.74px;font-size:12px;color:#fff;line-height:16px;transform:scaleX(0.9850);transform-origin:0 0;">Visibility</div>
<div style="left:1617px;top:452.0px;width:29px;height:29px;background:#323232;border:1px solid #1c1c1c;box-sizing:border-box;"></div>
<svg style="left:1625px;top:461.0px;" width="14" height="11" viewBox="0 0 14 11"><path d="M1.5 5.5 L5 9 L12 1.5" stroke="#fff" stroke-width="1.8" fill="none"/></svg>
<div class="t q" style="left:1652px;top:459.5px;font-size:12px;color:#fff;line-height:16px;">Visible</div>
<div style="left:1749px;top:452.0px;width:29px;height:29px;background:#323232;border:1px solid #1c1c1c;box-sizing:border-box;"></div>
<div class="t q" style="left:1784px;top:459.5px;font-size:12px;color:#fff;line-height:16px;">Clip</div>
<div class="t" style="left:1535.31px;top:493.74px;font-size:12px;color:#fff;line-height:16px;transform:scaleX(0.9850);transform-origin:0 0;">Opacity</div>
<div style="left:1617px;top:486px;width:218px;height:29px;background:#323232;border:1px solid #1c1c1c;box-sizing:border-box;"></div>
<div class="t q" style="left:1700px;top:493.5px;font-size:12px;color:#fff;width:100px;text-align:right;line-height:16px;">1.00</div>
<svg style="left:1814px;top:497.5px;" width="13" height="8" viewBox="0 0 13 8"><path d="M0.5 0.5 L6.5 6.5 L12.5 0.5" stroke="#e8e8e8" stroke-width="1" fill="none"/></svg>
<div class="t" style="left:1548.31px;top:527.74px;font-size:12px;color:#fff;line-height:16px;transform:scaleX(0.9850);transform-origin:0 0;">State</div>
<div style="left:1617px;top:520px;width:218px;height:29px;background:#323232;border:1px solid #1c1c1c;box-sizing:border-box;"></div>
<div class="t q" style="left:1623px;top:527.5px;font-size:12px;color:#fff;line-height:16px;">base state</div>
<svg style="left:1814px;top:531.5px;" width="13" height="8" viewBox="0 0 13 8"><path d="M0.5 0.5 L6.5 6.5 L12.5 0.5" stroke="#e8e8e8" stroke-width="1" fill="none"/></svg>
<div style="left:1487px;top:563px;width:400px;height:24px;background:#323232;border-top:1px solid #2aafd3;border-bottom:1px solid #2aafd3;box-sizing:border-box;"></div>
<div style="left:1487px;top:563px;width:206px;height:24px;background:#2aafd3;"></div>
<div class="t q" style="left:1487px;top:567px;font-size:12px;color:#1a1a1a;width:206px;text-align:center;line-height:16px;">Item</div>
<div class="t q" style="left:1693px;top:567px;font-size:12px;color:#2aafd3;width:202.6px;text-align:center;line-height:16px;">Layout</div>
<div style="left:1487px;top:587px;width:400px;height:21px;background:#1f1f1f;"></div>
<svg style="left:1492px;top:595px;" width="9" height="6" viewBox="0 0 9 6"><path d="M0 0.5 H8 L4 5Z" fill="#c8c8c8"/></svg>
<div class="t" style="left:1509.30px;top:590.54px;font-size:12px;color:#fff;line-height:16px;transform:scaleX(0.9310);transform-origin:0 0;">ADVANCED</div>
<div class="t" style="left:1535.41px;top:625.74px;font-size:12px;color:#fff;line-height:16px;transform:scaleX(0.9850);transform-origin:0 0;">Smooth</div>
<div style="left:1617px;top:618.0px;width:29px;height:29px;background:#323232;border:1px solid #1c1c1c;box-sizing:border-box;"></div>
<svg style="left:1625px;top:627.0px;" width="14" height="11" viewBox="0 0 14 11"><path d="M1.5 5.5 L5 9 L12 1.5" stroke="#fff" stroke-width="1.8" fill="none"/></svg>
<div class="t q" style="left:1652px;top:625.5px;font-size:12px;color:#fff;line-height:16px;">true</div>
<div class="t" style="left:1515.71px;top:659.74px;font-size:12px;color:#fff;line-height:16px;transform:scaleX(0.9850);transform-origin:0 0;">Antialiasing</div>
<div style="left:1617px;top:652.0px;width:29px;height:29px;background:#323232;border:1px solid #1c1c1c;box-sizing:border-box;"></div>
<div class="t q" style="left:1652px;top:659.5px;font-size:12px;color:#fff;line-height:16px;">false</div>
<div class="t" style="left:1543.58px;top:693.74px;font-size:12px;color:#fff;line-height:16px;transform:scaleX(0.9850);transform-origin:0 0;">Focus</div>
<div style="left:1617px;top:686.0px;width:29px;height:29px;background:#323232;border:1px solid #1c1c1c;box-sizing:border-box;"></div>
<div class="t q" style="left:1652px;top:693.5px;font-size:12px;color:#fff;line-height:16px;">false</div>
<div class="t" style="left:1507.53px;top:727.74px;font-size:12px;color:#fff;line-height:16px;transform:scaleX(0.9850);transform-origin:0 0;">Focus on tab</div>
<div style="left:1617px;top:720.0px;width:29px;height:29px;background:#323232;border:1px solid #1c1c1c;box-sizing:border-box;"></div>
<div class="t q" style="left:1652px;top:727.5px;font-size:12px;color:#fff;line-height:16px;">false</div>
<div class="t" style="left:1498.08px;top:761.74px;font-size:12px;color:#fff;line-height:16px;transform:scaleX(0.9850);transform-origin:0 0;">Baseline offset</div>
<div style="left:1617px;top:754px;width:86px;height:29px;background:#323232;border:1px solid #1c1c1c;box-sizing:border-box;"></div>
<div class="t q" style="left:1569px;top:761.5px;font-size:12px;color:#fff;width:100px;text-align:right;line-height:16px;">0</div>
<svg style="left:1682px;top:765.5px;" width="13" height="8" viewBox="0 0 13 8"><path d="M0.5 0.5 L6.5 6.5 L12.5 0.5" stroke="#e8e8e8" stroke-width="1" fill="none"/></svg>
<div style="left:1487px;top:793px;width:400px;height:21px;background:#1f1f1f;"></div>
<svg style="left:1492px;top:801px;" width="9" height="6" viewBox="0 0 9 6"><path d="M0 0.5 H8 L4 5Z" fill="#c8c8c8"/></svg>
<div class="t" style="left:1508.50px;top:796.54px;font-size:12px;color:#fff;line-height:16px;transform:scaleX(0.8895);transform-origin:0 0;">LAYER</div>
<div class="t" style="left:1532.75px;top:831.74px;font-size:12px;color:#fff;line-height:16px;transform:scaleX(0.9850);transform-origin:0 0;">Enabled</div>
<div style="left:1617px;top:824.0px;width:29px;height:29px;background:#323232;border:1px solid #1c1c1c;box-sizing:border-box;"></div>
<div class="t q" style="left:1652px;top:831.5px;font-size:12px;color:#fff;line-height:16px;">false</div>
<div class="t" style="left:1498.96px;top:865.74px;font-size:12px;color:#fff;line-height:16px;transform:scaleX(0.9850);transform-origin:0 0;">Sampler name</div>
<div style="left:1617px;top:858px;width:218px;height:29px;background:#323232;border:1px solid #1c1c1c;box-sizing:border-box;"></div>
<div class="t q" style="left:1623px;top:865.5px;font-size:12px;color:#fff;line-height:16px;">source</div>
<div class="t" style="left:1529.79px;top:899.74px;font-size:12px;color:#fff;line-height:16px;transform:scaleX(0.9850);transform-origin:0 0;">Samples</div>
<div style="left:1617px;top:892px;width:218px;height:29px;background:#323232;border:1px solid #1c1c1c;box-sizing:border-box;"></div>
<svg style="left:1814px;top:903.5px;" width="13" height="8" viewBox="0 0 13 8"><path d="M0.5 0.5 L6.5 6.5 L12.5 0.5" stroke="#e8e8e8" stroke-width="1" fill="none"/></svg>
<div class="t" style="left:1545.46px;top:933.74px;font-size:12px;color:#fff;line-height:16px;transform:scaleX(0.9850);transform-origin:0 0;">Effect</div>
<div style="left:1617px;top:926px;width:218px;height:29px;background:#323232;border:1px solid #1c1c1c;box-sizing:border-box;"></div>
<div class="t q" style="left:1623px;top:933.5px;font-size:12px;color:#fff;line-height:16px;">[None]</div>
<svg style="left:1814px;top:937.5px;" width="13" height="8" viewBox="0 0 13 8"><path d="M0.5 0.5 L6.5 6.5 L12.5 0.5" stroke="#e8e8e8" stroke-width="1" fill="none"/></svg>
<div style="left:1617px;top:960px;width:218px;height:5px;background:#323232;border:1px solid #1c1c1c;border-bottom:none;box-sizing:border-box;"></div>
<div style="left:1887px;top:139px;width:10px;height:826px;background:#3e3e3e;"></div>
<div style="left:1887px;top:139px;width:10px;height:621px;background:#505050;"></div>
<div style="left:48px;top:965px;width:1849px;height:26px;background:#404244;"></div>
<svg style="left:54.5px;top:973px;" width="11" height="11" viewBox="0 0 11 11"><rect x="0.5" y="0.5" width="10" height="10" fill="#5a5c5e"/><rect x="0.5" y="0.5" width="4" height="10" fill="#77797b"/></svg>
<div style="left:79px;top:968px;width:200px;height:21px;background:#fff;"></div>
<svg style="left:84px;top:972px;" width="14" height="13" viewBox="0 0 14 13"><circle cx="8" cy="4.8" r="4" fill="none" stroke="#555" stroke-width="1.3"/><path d="M5.2 7.8 L1 12" stroke="#555" stroke-width="1.5"/><path d="M9.5 11 H13 L11.2 12.8Z" fill="#555"/></svg>
<div class="t" style="left:106.70px;top:972.04px;font-size:12px;color:#8c8c8c;line-height:16px;transform:scaleX(0.9815);transform-origin:0 0;">Type to locate (Ctrl+K)</div>
<div style="left:282px;top:968px;width:1px;height:21px;background:#55575a;"></div>
<div class="t" style="left:291.97px;top:972.04px;font-size:12px;color:#fff;line-height:16px;transform:scaleX(0.8077);transform-origin:0 0;">1</div>
<div class="t" style="left:305.29px;top:972.04px;font-size:12px;color:#fff;line-height:16px;transform:scaleX(0.9217);transform-origin:0 0;">Issues</div>
<div class="t" style="left:353.59px;top:972.04px;font-size:12px;color:#fff;line-height:16px;transform:scaleX(1.0182);transform-origin:0 0;">2</div>
<div class="t" style="left:367.64px;top:972.04px;font-size:12px;color:#fff;line-height:16px;transform:scaleX(0.9280);transform-origin:0 0;">Search Results</div>
<div class="t" style="left:459.61px;top:972.04px;font-size:12px;color:#fff;line-height:16px;transform:scaleX(0.9655);transform-origin:0 0;">3</div>
<div class="t" style="left:474.10px;top:972.04px;font-size:12px;color:#fff;line-height:16px;transform:scaleX(1.0388);transform-origin:0 0;">Application Output</div>
<div class="t" style="left:592.60px;top:972.04px;font-size:12px;color:#fff;line-height:16px;">4</div>
<div class="t" style="left:606.58px;top:972.04px;font-size:12px;color:#fff;line-height:16px;transform:scaleX(1.0351);transform-origin:0 0;">Compile Output</div>
<div class="t" style="left:709.93px;top:972.04px;font-size:12px;color:#fff;line-height:16px;transform:scaleX(0.9138);transform-origin:0 0;">5</div>
<div class="t" style="left:723.50px;top:972.04px;font-size:12px;color:#fff;line-height:16px;transform:scaleX(0.9914);transform-origin:0 0;">QML Debugger Console</div>
<div class="t" style="left:867.14px;top:972.04px;font-size:12px;color:#fff;line-height:16px;transform:scaleX(1.1071);transform-origin:0 0;">6</div>
<div class="t" style="left:881.64px;top:972.04px;font-size:12px;color:#fff;line-height:16px;transform:scaleX(0.9398);transform-origin:0 0;">General Messages</div>
<div class="t" style="left:993.07px;top:972.04px;font-size:12px;color:#fff;line-height:16px;transform:scaleX(1.0545);transform-origin:0 0;">7</div>
<div class="t" style="left:1007.00px;top:972.04px;font-size:12px;color:#fff;line-height:16px;">Version Control</div>
<div class="t" style="left:1104.46px;top:972.04px;font-size:12px;color:#fff;line-height:16px;transform:scaleX(1.0877);transform-origin:0 0;">8</div>
<div class="t" style="left:1119.12px;top:972.04px;font-size:12px;color:#fff;line-height:16px;transform:scaleX(0.9244);transform-origin:0 0;">Test Results</div>
<svg style="left:1197px;top:972.5px;" width="9" height="13" viewBox="0 0 9 13"><path d="M0.5 5 L4.5 0.5 L8.5 5Z M0.5 8 L4.5 12.5 L8.5 8Z" fill="#d0d0d0"/></svg>
<div style="left:1844px;top:968px;width:23px;height:21px;background:#232425;"></div>
<svg style="left:1847px;top:971px;" width="17" height="15" viewBox="0 0 17 15"><path d="M9 3.5 L11.5 0.8 L14 3.5Z" fill="#d0d0d0"/><rect x="1.5" y="7" width="13" height="3.6" rx="1.8" fill="#1a1a1a" stroke="#e4e4e4" stroke-width="1"/><rect x="2.5" y="8" width="7" height="1.6" fill="#9a9a9a"/></svg>
<svg style="left:1879px;top:973px;" width="11" height="11" viewBox="0 0 11 11"><rect x="0.5" y="0.5" width="10" height="10" fill="#5a5c5e"/><rect x="6.5" y="0.5" width="4" height="10" fill="#77797b"/></svg>
<div class="t" style="left:101.4px;top:322.17218px;font-size:26.67px;color:#ed1c24;line-height:31px;font-family:'DejaVu Sans Mono',monospace;font-weight:bold;white-space:pre;">now&nbsp;it's&nbsp;its&nbsp;own</div>
<div class="t" style="left:101.4px;top:353.17218px;font-size:26.67px;color:#ed1c24;line-height:31px;font-family:'DejaVu Sans Mono',monospace;font-weight:bold;white-space:pre;">file/component.</div>
<div class="t" style="left:101.4px;top:384.17218px;font-size:26.67px;color:#ed1c24;line-height:31px;font-family:'DejaVu Sans Mono',monospace;font-weight:bold;white-space:pre;">double&nbsp;clicking</div>
<div class="t" style="left:101.4px;top:415.17218px;font-size:26.67px;color:#ed1c24;line-height:31px;font-family:'DejaVu Sans Mono',monospace;font-weight:bold;white-space:pre;">should&nbsp;open&nbsp;a</div>
<div class="t" style="left:101.4px;top:446.17218px;font-size:26.67px;color:#ed1c24;line-height:31px;font-family:'DejaVu Sans Mono',monospace;font-weight:bold;white-space:pre;">material&nbsp;editing</div>
<div class="t" style="left:101.4px;top:477.17218px;font-size:26.67px;color:#ed1c24;line-height:31px;font-family:'DejaVu Sans Mono',monospace;font-weight:bold;white-space:pre;">view,&nbsp;not...this</div>
<svg style="left:360px;top:455px;" width="170" height="75" viewBox="0 0 170 75"><path d="M12.399999999999977 24.5 H84.60000000000002 V12.5 L157.29999999999995 37.5 L84.60000000000002 62.299999999999955 V49.39999999999998 H12.399999999999977 Z" fill="none" stroke="#ed1c24" stroke-width="5" stroke-linejoin="round"/></svg>
<svg style="left:195px;top:515px;" width="70" height="110" viewBox="0 0 70 110"><path d="M21.80000000000001 7.5 H46.5 V53.700000000000045 H58.599999999999994 L34 99.29999999999995 L9.400000000000006 53.700000000000045 H21.80000000000001 Z" fill="none" stroke="#ed1c24" stroke-width="5" stroke-linejoin="round"/></svg>
<div style="left:1897px;top:139px;width:6px;height:858px;background:linear-gradient(to right,#adbad2 0%,#c6d1e2 100%);"></div>
<div style="left:1903px;top:139px;width:1px;height:858px;background:#fff;"></div>
<div style="left:0px;top:991px;width:1903px;height:6px;background:linear-gradient(to bottom,#adbad2 0%,#c9d4e5 100%);"></div>
<div style="left:0px;top:997px;width:1904px;height:1px;background:#fff;"></div>
<div style="left:0px;top:990px;width:1897px;height:1px;background:#2b2b2b;"></div>
<div style="left:1897px;top:991px;width:5px;height:5px;background:#fff;border:1px solid #555;box-sizing:border-box;"></div>
<div style="left:1897px;top:469px;width:5px;height:5px;background:#fff;border:1px solid #555;box-sizing:border-box;"></div>
<div style="left:935px;top:991px;width:5px;height:5px;background:#fff;border:1px solid #555;box-sizing:border-box;"></div>
<div style="left:1903px;top:139px;width:17px;height:859px;background:#f0f0f0;"></div>
<div style="left:1904px;top:307px;width:15px;height:673px;background:#cdcdcd;"></div>
<svg style="left:1907px;top:144px;" width="10" height="8" viewBox="0 0 10 8"><path d="M1.2 6 L5 2.2 L8.8 6" fill="none" stroke="#404040" stroke-width="1.6"/></svg>
<svg style="left:1907px;top:984px;" width="10" height="8" viewBox="0 0 10 8"><path d="M1.2 2 L5 5.8 L8.8 2" fill="none" stroke="#404040" stroke-width="1.6"/></svg>
<div style="left:0px;top:997px;width:1920px;height:17px;background:#f0f0f0;"></div>
<div style="left:44px;top:998px;width:1842px;height:15px;background:#cdcdcd;"></div>
<svg style="left:4px;top:1001px;" width="8" height="10" viewBox="0 0 8 10"><path d="M6 1.2 L2.2 5 L6 8.8" fill="none" stroke="#404040" stroke-width="1.6"/></svg>
<svg style="left:1891px;top:1001px;" width="8" height="10" viewBox="0 0 8 10"><path d="M2 1.2 L5.8 5 L2 8.8" fill="none" stroke="#404040" stroke-width="1.6"/></svg>
<div style="left:0px;top:1014px;width:1920px;height:26px;background:#f0f0f0;border-top:1px solid #dcdcdc;box-sizing:border-box;"></div>
<div style="left:155px;top:1016px;width:1px;height:23px;background:#d8d8d8;"></div>
<div style="left:311px;top:1016px;width:1px;height:23px;background:#d8d8d8;"></div>
<div style="left:467px;top:1016px;width:1px;height:23px;background:#d8d8d8;"></div>
<div style="left:623px;top:1016px;width:1px;height:23px;background:#d8d8d8;"></div>
<div style="left:1721px;top:1016px;width:1px;height:23px;background:#d8d8d8;"></div>
<svg style="left:3px;top:1021px;" width="13" height="13" viewBox="0 0 13 13"><path d="M6.5 0.5 V12.5 M0.5 6.5 H12.5" stroke="#333" stroke-width="1.1"/><path d="M6.5 0 L8.5 2.5 H4.5Z M6.5 13 L8.5 10.5 H4.5Z M0 6.5 L2.5 4.5 V8.5Z M13 6.5 L10.5 4.5 V8.5Z" fill="#333"/></svg>
<div class="t" style="left:21.54px;top:1019.84px;font-size:12px;color:#000;line-height:16px;transform:scaleX(0.9218);transform-origin:0 0;">875, 461px</div>
<svg style="left:161px;top:1021px;" width="14" height="13" viewBox="0 0 14 13"><rect x="3.5" y="1.5" width="9" height="8" fill="none" stroke="#333" stroke-width="1" stroke-dasharray="2 1.2"/><path d="M1.5 1 V11.5 M1.5 11.5 H12" stroke="#333" stroke-width="0.9" fill="none"/><path d="M0 3 L1.5 0.5 L3 3Z M13.5 11.5 L11 10 V13Z" fill="#333"/></svg>
<svg style="left:317px;top:1021px;" width="14" height="13" viewBox="0 0 14 13"><rect x="3.5" y="1.5" width="9" height="7.5" fill="#fff" stroke="#333" stroke-width="1.2"/><path d="M1.5 1 V11.5 M1.5 11.5 H12" stroke="#333" stroke-width="0.9" fill="none"/><path d="M0 3 L1.5 0.5 L3 3Z M13.5 11.5 L11 10 V13Z" fill="#333"/></svg>
<div class="t" style="left:335.76px;top:1019.84px;font-size:12px;color:#000;line-height:16px;transform:scaleX(0.9327);transform-origin:0 0;">1920 × 1040px</div>
<div class="t" style="left:1742.15px;top:1019.34px;font-size:12px;color:#000;line-height:16px;transform:scaleX(0.9456);transform-origin:0 0;">100%</div>
<svg style="left:1778px;top:1020px;" width="16" height="16" viewBox="0 0 16 16"><circle cx="8" cy="8" r="7" fill="#f4f4f4" stroke="#8a8a8a" stroke-width="1"/><path d="M4.5 8 H11.5" stroke="#333" stroke-width="1.6"/></svg>
<svg style="left:1900px;top:1020px;" width="16" height="16" viewBox="0 0 16 16"><circle cx="8" cy="8" r="7" fill="#f4f4f4" stroke="#8a8a8a" stroke-width="1"/><path d="M4.5 8 H11.5 M8 4.5 V11.5" stroke="#333" stroke-width="1.6"/></svg>
<div style="left:1804px;top:1025px;width:85px;height:4px;background:#e7eaea;border:1px solid #d6d6d6;box-sizing:border-box;"></div>
<svg style="left:1842px;top:1018px;" width="11" height="18" viewBox="0 0 11 18"><path d="M0 0 H11 V12.5 L5.5 17.5 L0 12.5Z" fill="#0078d7"/></svg>
</body></html>
